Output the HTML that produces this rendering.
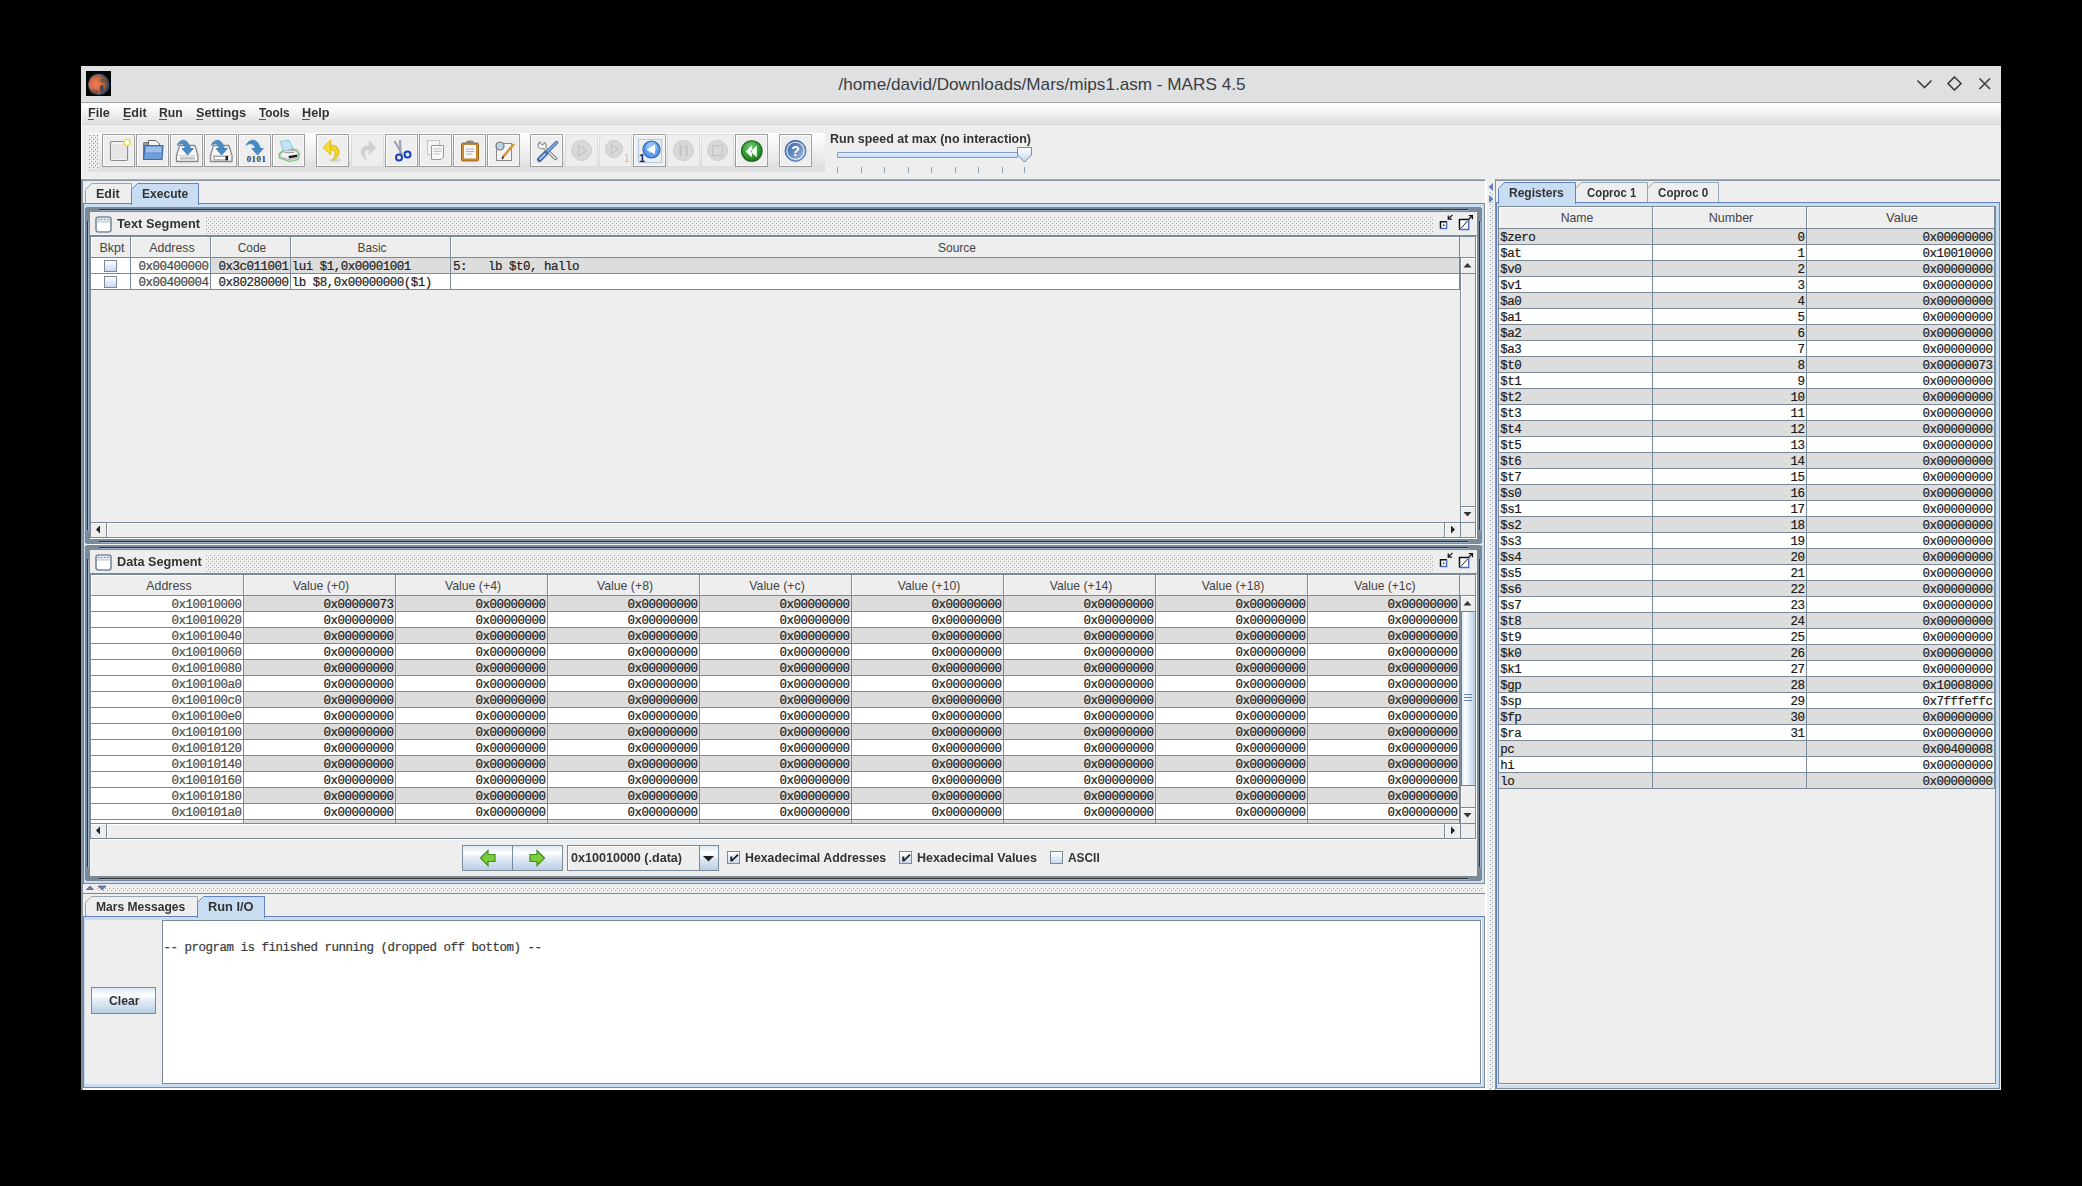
<!DOCTYPE html><html><head><meta charset="utf-8"><style>html,body{margin:0;padding:0;}body{width:2082px;height:1186px;background:#000;position:relative;overflow:hidden;}body>div,body>svg{position:absolute;}.t{white-space:pre;}</style></head><body><div style="left:81px;top:66px;width:1920px;height:1024px;background:#eeeeee;"></div>
<div style="left:81px;top:66px;width:1920px;height:36px;background:#dfe0e2;"></div>
<div style="left:81px;top:102px;width:1920px;height:1px;background:#a4a6a8;"></div>
<svg style="left:86px;top:71px;" width="25" height="25" viewBox="0 0 25 25"><defs><radialGradient id="mg" cx="0.38" cy="0.5" r="0.62"><stop offset="0" stop-color="#f07a4c"/><stop offset="0.45" stop-color="#d86c45"/><stop offset="0.78" stop-color="#8c5a42"/><stop offset="1" stop-color="#23384c"/></radialGradient><filter id="mb" x="-20%" y="-20%" width="140%" height="140%"><feGaussianBlur stdDeviation="0.7"/></filter></defs><rect width="25" height="25" fill="#050506"/><g filter="url(#mb)"><circle cx="12.8" cy="13.4" r="10.6" fill="#2f5a80"/><circle cx="12.5" cy="13.2" r="10" fill="url(#mg)"/><ellipse cx="17.5" cy="9.5" rx="3.5" ry="2.2" fill="#6a5040" opacity=".8"/><ellipse cx="15.8" cy="17.8" rx="1.8" ry="4" fill="#3a4654" opacity=".9"/><ellipse cx="8.5" cy="20.5" rx="4" ry="2" fill="#6a4a3a" opacity=".6"/></g></svg>
<div class="t" style="left:1041.5px;top:75.91px;font:normal 17px 'Liberation Sans', sans-serif;line-height:17px;color:#3a3d41;transform:translateX(-50%) scaleX(1.0088);transform-origin:center;">/home/david/Downloads/Mars/mips1.asm - MARS 4.5</div>
<svg style="left:1910px;top:70px;" width="90" height="26" viewBox="0 0 90 26"><g stroke="#3c3f43" stroke-width="1.6" fill="none"><path d="M7.5 10.5 L14.5 17.5 L21.5 10.5"/><path d="M44.5 7 L51 13.5 L44.5 20 L38 13.5 Z"/><path d="M69.5 8.5 L80 19 M80 8.5 L69.5 19"/></g></svg>
<div style="left:81px;top:103px;width:1920px;height:21px;background:linear-gradient(#ffffff 0%, #f4f4f4 40%, #dddddd 100%);"></div>
<div style="left:81px;top:123px;width:1920px;height:1px;background:#e2e2e2;"></div>
<div style="left:81px;top:124px;width:1920px;height:1px;background:#d6d6d6;"></div>
<div class="t" style="left:87.5px;top:106.92px;font:bold 12.5px 'Liberation Sans', sans-serif;line-height:12.5px;color:#333;transform:scaleX(1.0117);transform-origin:left;">File</div>
<div style="left:87.5px;top:118.5px;width:6.5px;height:1px;background:#555;"></div>
<div class="t" style="left:122.5px;top:106.92px;font:bold 12.5px 'Liberation Sans', sans-serif;line-height:12.5px;color:#333;transform:scaleX(1.0038);transform-origin:left;">Edit</div>
<div style="left:122.5px;top:118.5px;width:7px;height:1px;background:#555;"></div>
<div class="t" style="left:159.3px;top:106.92px;font:bold 12.5px 'Liberation Sans', sans-serif;line-height:12.5px;color:#333;transform:scaleX(0.9748);transform-origin:left;">Run</div>
<div style="left:159.3px;top:118.5px;width:7.5px;height:1px;background:#555;"></div>
<div class="t" style="left:196px;top:106.92px;font:bold 12.5px 'Liberation Sans', sans-serif;line-height:12.5px;color:#333;transform:scaleX(1.0139);transform-origin:left;">Settings</div>
<div style="left:196px;top:118.5px;width:7px;height:1px;background:#555;"></div>
<div class="t" style="left:259.2px;top:106.92px;font:bold 12.5px 'Liberation Sans', sans-serif;line-height:12.5px;color:#333;transform:scaleX(0.9443);transform-origin:left;">Tools</div>
<div style="left:259.2px;top:118.5px;width:7px;height:1px;background:#555;"></div>
<div class="t" style="left:302.3px;top:106.92px;font:bold 12.5px 'Liberation Sans', sans-serif;line-height:12.5px;color:#333;transform:scaleX(1.0150);transform-origin:left;">Help</div>
<div style="left:302.3px;top:118.5px;width:8px;height:1px;background:#555;"></div>
<div style="left:88px;top:133px;width:737px;height:37px;background:linear-gradient(#ffffff 0%, #f4f4f4 35%, #e9e9e9 70%, #dcdcdc 100%);"></div>
<div style="left:88px;top:170px;width:737px;height:2px;background:#e2e2e2;"></div>
<svg style="left:88px;top:134px" width="11" height="35"><defs><pattern id="bmp" width="4" height="4" patternUnits="userSpaceOnUse"><rect x="0" y="0" width="1" height="1" fill="#fff"/><rect x="1" y="1" width="1" height="1" fill="#8494a8"/><rect x="2" y="2" width="1" height="1" fill="#fff"/><rect x="3" y="3" width="1" height="1" fill="#8494a8"/></pattern></defs><rect width="11" height="35" fill="#e6e9ec"/><rect width="11" height="35" fill="url(#bmp)"/></svg>
<div style="left:102px;top:134px;width:33px;height:33px;box-sizing:border-box;border:1px solid #9d9d9d;box-shadow:inset 1px 1px 0 #ffffff, inset -1px -1px 0 #f8f8f8;background:#eeeeee;"></div>
<div style="left:136px;top:134px;width:33px;height:33px;box-sizing:border-box;border:1px solid #9d9d9d;box-shadow:inset 1px 1px 0 #ffffff, inset -1px -1px 0 #f8f8f8;background:#eeeeee;"></div>
<div style="left:170px;top:134px;width:33px;height:33px;box-sizing:border-box;border:1px solid #9d9d9d;box-shadow:inset 1px 1px 0 #ffffff, inset -1px -1px 0 #f8f8f8;background:#eeeeee;"></div>
<div style="left:204px;top:134px;width:33px;height:33px;box-sizing:border-box;border:1px solid #9d9d9d;box-shadow:inset 1px 1px 0 #ffffff, inset -1px -1px 0 #f8f8f8;background:#eeeeee;"></div>
<div style="left:238px;top:134px;width:33px;height:33px;box-sizing:border-box;border:1px solid #9d9d9d;box-shadow:inset 1px 1px 0 #ffffff, inset -1px -1px 0 #f8f8f8;background:#eeeeee;"></div>
<div style="left:272px;top:134px;width:33px;height:33px;box-sizing:border-box;border:1px solid #9d9d9d;box-shadow:inset 1px 1px 0 #ffffff, inset -1px -1px 0 #f8f8f8;background:#eeeeee;"></div>
<div style="left:316px;top:134px;width:33px;height:33px;box-sizing:border-box;border:1px solid #9d9d9d;box-shadow:inset 1px 1px 0 #ffffff, inset -1px -1px 0 #f8f8f8;background:#eeeeee;"></div>
<div style="left:351px;top:134px;width:33px;height:33px;box-sizing:border-box;border:1px solid #dcdcdc;background:#eeeeee;"></div>
<div style="left:385px;top:134px;width:33px;height:33px;box-sizing:border-box;border:1px solid #9d9d9d;box-shadow:inset 1px 1px 0 #ffffff, inset -1px -1px 0 #f8f8f8;background:#eeeeee;"></div>
<div style="left:419px;top:134px;width:33px;height:33px;box-sizing:border-box;border:1px solid #9d9d9d;box-shadow:inset 1px 1px 0 #ffffff, inset -1px -1px 0 #f8f8f8;background:#eeeeee;"></div>
<div style="left:453px;top:134px;width:33px;height:33px;box-sizing:border-box;border:1px solid #9d9d9d;box-shadow:inset 1px 1px 0 #ffffff, inset -1px -1px 0 #f8f8f8;background:#eeeeee;"></div>
<div style="left:487px;top:134px;width:33px;height:33px;box-sizing:border-box;border:1px solid #9d9d9d;box-shadow:inset 1px 1px 0 #ffffff, inset -1px -1px 0 #f8f8f8;background:#eeeeee;"></div>
<div style="left:530px;top:134px;width:33px;height:33px;box-sizing:border-box;border:1px solid #9d9d9d;box-shadow:inset 1px 1px 0 #ffffff, inset -1px -1px 0 #f8f8f8;background:#eeeeee;"></div>
<div style="left:565px;top:134px;width:33px;height:33px;box-sizing:border-box;border:1px solid #dcdcdc;background:#eeeeee;"></div>
<div style="left:599px;top:134px;width:33px;height:33px;box-sizing:border-box;border:1px solid #dcdcdc;background:#eeeeee;"></div>
<div style="left:633px;top:134px;width:33px;height:33px;box-sizing:border-box;border:1px solid #9d9d9d;box-shadow:inset 1px 1px 0 #ffffff, inset -1px -1px 0 #f8f8f8;background:#eeeeee;"></div>
<div style="left:638px;top:139px;width:24px;height:24px;box-sizing:border-box;border:1px solid #b3c9e0;"></div>
<div style="left:667px;top:134px;width:33px;height:33px;box-sizing:border-box;border:1px solid #dcdcdc;background:#eeeeee;"></div>
<div style="left:701px;top:134px;width:33px;height:33px;box-sizing:border-box;border:1px solid #dcdcdc;background:#eeeeee;"></div>
<div style="left:735px;top:134px;width:33px;height:33px;box-sizing:border-box;border:1px solid #9d9d9d;box-shadow:inset 1px 1px 0 #ffffff, inset -1px -1px 0 #f8f8f8;background:#eeeeee;"></div>
<div style="left:779px;top:134px;width:33px;height:33px;box-sizing:border-box;border:1px solid #9d9d9d;box-shadow:inset 1px 1px 0 #ffffff, inset -1px -1px 0 #f8f8f8;background:#eeeeee;"></div>
<svg style="left:102px;top:134px;" width="33" height="33" viewBox="0 0 33 33"><rect x="8.5" y="7.5" width="17" height="19" rx="1.5" fill="#f4f4f4" stroke="#8c8c8c" stroke-width="1.2"/><rect x="10" y="10" width="14" height="15" fill="#e6e6e6"/><circle cx="25" cy="8.5" r="3" fill="#ffffff" stroke="#eedd55" stroke-width="1.6"/></svg>
<svg style="left:136px;top:134px;" width="33" height="33" viewBox="0 0 33 33"><rect x="7.5" y="8.5" width="9" height="17" rx="1" fill="#999" stroke="#777" stroke-width="1"/><path d="M12.5 6.5 H20 L23.5 10 V17 H12.5 Z" fill="#f6f6f6" stroke="#666" stroke-width="1"/><path d="M9 11.5 H27 L26 25.5 H7.5 Z" fill="#6f9fd6" stroke="#3d6aab" stroke-width="1.2"/><rect x="10" y="13" width="15" height="5" fill="#9cc0e8"/></svg>
<svg style="left:170px;top:134px;" width="33" height="33" viewBox="0 0 33 33"><path d="M6.5 27.5 V21.5 L9.5 11.5 H25 L28 21.5 V27.5 Z" fill="#f7f7f7" stroke="#8a8a8a" stroke-width="1.3" stroke-linejoin="round"/><path d="M7 21.5 H27.5" stroke="#d6d6d6" stroke-width="1"/><rect x="10" y="22.8" width="15" height="2.8" fill="#c4c4c4"/><path d="M7.2 11.5 C9 5, 18 3, 20.3 14.5 L15.2 14.5 C14.5 10, 11 8, 7.2 11.5 Z" fill="#4a8cc6" stroke="#3a78b2" stroke-width=".6"/><path d="M12 14.5 H23.5 L17.6 21 Z" fill="#4a8cc6" stroke="#3a78b2" stroke-width=".8" stroke-linejoin="round"/></svg>
<svg style="left:204px;top:134px;" width="33" height="33" viewBox="0 0 33 33"><path d="M6.5 27.5 V21.5 L9.5 11.5 H25 L28 21.5 V27.5 Z" fill="#f7f7f7" stroke="#8a8a8a" stroke-width="1.3" stroke-linejoin="round"/><path d="M7 21.5 H27.5" stroke="#d6d6d6" stroke-width="1"/><rect x="10" y="22.3" width="13.5" height="3.6" fill="#ffffff" stroke="#8a8a8a" stroke-width=".9"/><rect x="21.5" y="22" width="2.6" height="4.2" fill="#222"/><path d="M7.2 11.5 C9 5, 18 3, 20.3 14.5 L15.2 14.5 C14.5 10, 11 8, 7.2 11.5 Z" fill="#4a8cc6" stroke="#3a78b2" stroke-width=".6"/><path d="M12 14.5 H23.5 L17.6 21 Z" fill="#4a8cc6" stroke="#3a78b2" stroke-width=".8" stroke-linejoin="round"/></svg>
<svg style="left:238px;top:134px;" width="33" height="33" viewBox="0 0 33 33"><path d="M8.2 11.5 C10 5, 20 3, 22.3 14.5 L17.2 14.5 C16.5 10, 12 8, 8.2 11.5 Z" fill="#4a8cc6" stroke="#3a78b2" stroke-width=".6"/><path d="M13.8 14.5 H25.3 L19.5 21 Z" fill="#4a8cc6" stroke="#3a78b2" stroke-width=".8" stroke-linejoin="round"/><text x="18.5" y="28.3" font-family="'Liberation Serif', serif" font-size="9" font-weight="bold" text-anchor="middle" fill="#3a3a3a" letter-spacing=".4">0101</text></svg>
<svg style="left:272px;top:134px;" width="33" height="33" viewBox="0 0 33 33"><path d="M7 20 L12 15.5 H24.5 L27.5 20 L26 25.5 L18 27.5 L7.5 24 Z" fill="none" stroke="#6cc06c" stroke-width="1.1"/><path d="M8.3 7.4 L17 6.4 L21 14.5 L11.7 17.5 Z" fill="#c4e2f8" stroke="#7cc8c8" stroke-width=".9"/><path d="M8 20.5 L12.5 16.8 H23.5 L26.5 20 L25.5 24 L17.5 25.8 L8.5 23 Z" fill="#f2f2f2" stroke="#a8a8a8" stroke-width=".9"/><path d="M16.5 22 L25.5 20.5 L25 23 L17 24.5 Z" fill="#1a1a1a"/><path d="M12.5 18.5 H22" stroke="#888" stroke-width=".8"/></svg>
<svg style="left:316px;top:134px;" width="33" height="33" viewBox="0 0 33 33"><ellipse cx="19" cy="26" rx="6" ry="2" fill="#bbb" opacity=".45"/><path d="M14.5 11 Q23.5 11 23 19 Q22.5 24 16.5 26.5 Q19.5 22 19 18.5 Q18.5 15.5 14.5 16 Z" fill="#f0d428" stroke="#d2ac10" stroke-width=".7"/><path d="M7 13.5 L14.8 6 V21 Z" fill="#f3da30" stroke="#d2ac10" stroke-width=".7" stroke-linejoin="round"/></svg>
<svg style="left:351px;top:134px;" width="33" height="33" viewBox="0 0 33 33"><path d="M18.5 11 Q9.5 11 10 19 Q10.5 24 16.5 26.5 Q13.5 22 14 18.5 Q14.5 15.5 18.5 16 Z" fill="#d0d0d0"/><path d="M25.5 13.5 L17.8 6 V21 Z" fill="#d0d0d0"/></svg>
<svg style="left:385px;top:134px;" width="33" height="33" viewBox="0 0 33 33"><path d="M9.5 7 L17 20 M15 6 L15.5 20" stroke="#9aa0b8" stroke-width="2.2" fill="none"/><circle cx="14" cy="23.5" r="3" fill="none" stroke="#1a3fb8" stroke-width="2"/><circle cx="22.5" cy="20.5" r="3" fill="none" stroke="#1a3fb8" stroke-width="2"/></svg>
<svg style="left:419px;top:134px;" width="33" height="33" viewBox="0 0 33 33"><rect x="8.5" y="6.5" width="12" height="14" fill="#f4f4f4" stroke="#c4c4c4"/><path d="M12.5 11.5 H24.5 V23 L22 25.5 H12.5 Z" fill="#f8f8f8" stroke="#999" stroke-width="1"/><path d="M14.5 15 H22.5 M14.5 17.5 H22.5 M14.5 20 H21" stroke="#bbb" stroke-width=".9"/></svg>
<svg style="left:453px;top:134px;" width="33" height="33" viewBox="0 0 33 33"><rect x="8.5" y="9" width="17" height="18" rx="1.5" fill="#c88a2e" stroke="#9a6a20" stroke-width="1"/><rect x="11" y="11" width="12" height="13.5" fill="#f6f6f6"/><rect x="13" y="6.5" width="8" height="4" rx="2" fill="#888"/><path d="M13 15 H21 M13 17.5 H21 M13 20 H19" stroke="#aaa" stroke-width=".9"/></svg>
<svg style="left:487px;top:134px;" width="33" height="33" viewBox="0 0 33 33"><rect x="9.5" y="9.5" width="15" height="17" fill="#f4f4f4" stroke="#888" stroke-width="1"/><circle cx="13" cy="12" r="4" fill="#b8d0ea" stroke="#777" stroke-width="1.2"/><path d="M27 10 L16 23" stroke="#d09838" stroke-width="2.6"/><path d="M16.5 22.5 L15 25" stroke="#333" stroke-width="1.5"/></svg>
<svg style="left:530px;top:134px;" width="33" height="33" viewBox="0 0 33 33"><path d="M10 8 Q7 10 8.5 13 Q10.5 15.5 13.5 14.5 L24 25 Q26 26.5 27 24.5 L16 13.8 Q17 10.5 14.5 8.5 L12.8 10.8 L11 10.2 L10.5 8.3 Z" fill="#f4f4f4" stroke="#8c8c8c" stroke-width="1.1" stroke-linejoin="round"/><path d="M26.5 8.5 L17 18" stroke="#3d6aab" stroke-width="3.4" stroke-linecap="round"/><path d="M26.5 8.5 L17 18" stroke="#8db4e2" stroke-width="1.4" stroke-linecap="round"/><path d="M15.5 19.5 L9.5 25.5" stroke="#3d6aab" stroke-width="5.2" stroke-linecap="round"/><path d="M15 20 L10 25" stroke="#a9c6ea" stroke-width="1.8" stroke-linecap="round"/></svg>
<svg style="left:565px;top:134px;" width="33" height="33" viewBox="0 0 33 33"><circle cx="16.5" cy="16.5" r="10" fill="#d8d8d8" stroke="#cccccc" stroke-width="1"/><path d="M13.5 11 L22 16.5 L13.5 22 Z" fill="none" stroke="#c4c4c4" stroke-width="1.2"/></svg>
<svg style="left:599px;top:134px;" width="33" height="33" viewBox="0 0 33 33"><circle cx="15" cy="15" r="8.5" fill="#d8d8d8" stroke="#cccccc" stroke-width="1"/><path d="M12.5 10.5 L19.5 15 L12.5 19.5 Z" fill="none" stroke="#c4c4c4" stroke-width="1.2"/><text x="25" y="28" font-family="'Liberation Sans', sans-serif" font-size="10" fill="#c0c0c0">1</text></svg>
<svg style="left:633px;top:134px;" width="33" height="33" viewBox="0 0 33 33"><circle cx="18.5" cy="15.5" r="8.5" fill="#5a9be8" stroke="#2c67c0" stroke-width="1.2"/><circle cx="18.5" cy="13.5" r="5.5" fill="#a9d0f7" opacity=".7"/><path d="M22 10.5 L14 15.5 L22 20.5 Z" fill="#ffffff"/><text x="6" y="28" font-family="'Liberation Sans', sans-serif" font-size="11" font-weight="bold" fill="#1a2a50">1</text></svg>
<svg style="left:667px;top:134px;" width="33" height="33" viewBox="0 0 33 33"><circle cx="16.5" cy="16.5" r="10" fill="#d8d8d8" stroke="#cccccc" stroke-width="1"/><path d="M13.5 11 V22 M19.5 11 V22" stroke="#c4c4c4" stroke-width="2.2"/></svg>
<svg style="left:701px;top:134px;" width="33" height="33" viewBox="0 0 33 33"><circle cx="16.5" cy="16.5" r="10" fill="#d8d8d8" stroke="#cccccc" stroke-width="1"/><rect x="11.5" y="11.5" width="10" height="10" fill="none" stroke="#c4c4c4" stroke-width="1.2"/></svg>
<svg style="left:735px;top:134px;" width="33" height="33" viewBox="0 0 33 33"><defs><radialGradient id="rg" cx="0.45" cy="0.35" r="0.7"><stop offset="0" stop-color="#7fd07f"/><stop offset="0.6" stop-color="#2f9a2f"/><stop offset="1" stop-color="#1a641a"/></radialGradient></defs><circle cx="16.8" cy="17" r="10.3" fill="url(#rg)" stroke="#1f5f1f" stroke-width="1.1"/><path d="M10.6 17.5 L16.8 11.6 V23.2 Z" fill="#ffffff"/><path d="M15.6 17.5 L21.8 11.6 V23.2 Z" fill="#f0fff0"/><path d="M15.6 17.5 L16.8 16.3 V18.7 Z" fill="#3a9a3a"/></svg>
<svg style="left:779px;top:134px;" width="33" height="33" viewBox="0 0 33 33"><defs><linearGradient id="hg" x1="0" y1="0" x2="1" y2="1"><stop offset="0" stop-color="#2a5597"/><stop offset="1" stop-color="#a8c6e6"/></linearGradient></defs><circle cx="16.5" cy="16.8" r="10.5" fill="url(#hg)" stroke="#4a72b0" stroke-width="1"/><circle cx="16.5" cy="16.8" r="8.6" fill="none" stroke="#e8f0fa" stroke-width="1.1"/><text x="16.5" y="22" font-family="'Liberation Sans', sans-serif" font-size="14" font-weight="bold" text-anchor="middle" fill="#ffffff">?</text></svg>
<div class="t" style="left:830px;top:132.82px;font:bold 12.5px 'Liberation Sans', sans-serif;line-height:12.5px;color:#333;transform:scaleX(0.9979);transform-origin:left;">Run speed at max (no interaction)</div>
<div style="left:837px;top:152px;width:181px;height:6px;box-sizing:border-box;border:1px solid #7b9ad0;border-radius:1px;background:linear-gradient(#e8f1fb,#c6daf0);"></div>
<svg style="left:1016px;top:146px;" width="18" height="18" viewBox="0 0 18 18"><path d="M1.5 1.5 H15.5 V9 L8.5 16 L1.5 9 Z" fill="url(#thg)" stroke="#7a8a99" stroke-width="1"/><defs><linearGradient id="thg" x1="0" y1="0" x2="0" y2="1"><stop offset="0" stop-color="#ffffff"/><stop offset="1" stop-color="#c0d4ea"/></linearGradient></defs></svg>
<div style="left:837px;top:167px;width:1px;height:6px;background:#8aa4c4;"></div>
<div style="left:861px;top:167px;width:1px;height:6px;background:#8aa4c4;"></div>
<div style="left:884px;top:167px;width:1px;height:6px;background:#8aa4c4;"></div>
<div style="left:908px;top:167px;width:1px;height:6px;background:#8aa4c4;"></div>
<div style="left:931px;top:167px;width:1px;height:6px;background:#8aa4c4;"></div>
<div style="left:955px;top:167px;width:1px;height:6px;background:#8aa4c4;"></div>
<div style="left:978px;top:167px;width:1px;height:6px;background:#8aa4c4;"></div>
<div style="left:1002px;top:167px;width:1px;height:6px;background:#8aa4c4;"></div>
<div style="left:1024px;top:167px;width:1px;height:6px;background:#8aa4c4;"></div>
<div style="left:81px;top:179px;width:1406px;height:1px;background:#a3b0bc;"></div>
<div style="left:81px;top:180px;width:1406px;height:1px;background:#8596a6;"></div>
<div style="left:81px;top:179px;width:2px;height:911px;background:#8393a2;"></div>
<div style="left:81px;top:103px;width:1px;height:76px;background:#fafafa;"></div>
<div style="left:83px;top:181px;width:1402px;height:22px;background:#eeeeee;"></div>
<svg style="left:85px;top:183px;" width="47" height="21" viewBox="0 0 47 21"><path d="M0.5 21 V6.5 L6.5 0.5 H46.5 V21" fill="#eeeeee" stroke="#96a5b4" stroke-width="1"/></svg>
<div class="t" style="left:95.7px;top:187.82px;font:bold 12.5px 'Liberation Sans', sans-serif;line-height:12.5px;color:#333;transform:scaleX(0.9996);transform-origin:left;">Edit</div>
<div style="left:83px;top:203px;width:1402px;height:1px;background:#6382bf;"></div>
<div style="left:83px;top:203px;width:1px;height:681px;background:#6382bf;"></div>
<div style="left:84px;top:204px;width:1400px;height:3px;background:#c8ddf2;"></div>
<div style="left:84px;top:204px;width:1px;height:679px;background:#c8ddf2;"></div>
<div style="left:1482px;top:204px;width:2px;height:679px;background:#c8ddf2;"></div>
<div style="left:84px;top:881px;width:1400px;height:2px;background:#c8ddf2;"></div>
<div style="left:1484px;top:203px;width:1px;height:681px;background:#7a8a99;"></div>
<div style="left:83px;top:883px;width:1402px;height:1px;background:#7a8a99;"></div>
<svg style="left:131px;top:183px;" width="68" height="22" viewBox="0 0 68 22"><path d="M0.5 22 V6.5 L6.5 0.5 H67.5 V22" fill="#c8ddf2" stroke="#6382bf" stroke-width="1"/></svg>
<div class="t" style="left:141.7px;top:187.82px;font:bold 12.5px 'Liberation Sans', sans-serif;line-height:12.5px;color:#333;transform:scaleX(0.9655);transform-origin:left;">Execute</div>
<div style="left:132px;top:203px;width:66px;height:1px;background:#c8ddf2;"></div>
<div style="left:85px;top:544px;width:1397px;height:1px;background:#f4f4f4;"></div>
<div style="left:86px;top:207px;width:1395px;height:337px;background:#7a8a99;"></div>
<div style="left:85px;top:208px;width:1397px;height:335px;background:#7a8a99;"></div>
<div style="left:90px;top:212px;width:1387px;height:327px;background:#eeeeee;"></div>
<div style="left:100px;top:210px;width:1369px;height:1px;background:#9fb1c3;"></div>
<div style="left:88px;top:222px;width:1px;height:309px;background:#9fb1c3;"></div>
<div style="left:1480px;top:222px;width:1px;height:309px;background:#9fb1c3;"></div>
<div style="left:100px;top:542px;width:1369px;height:1px;background:#9fb1c3;"></div>
<div style="left:99px;top:209px;width:1369px;height:1px;background:#333333;"></div>
<div style="left:87px;top:221px;width:1px;height:309px;background:#333333;"></div>
<div style="left:1479px;top:221px;width:1px;height:309px;background:#333333;"></div>
<div style="left:99px;top:541px;width:1369px;height:1px;background:#333333;"></div>
<div style="left:90px;top:235px;width:1387px;height:1px;background:#7a8a99;"></div>
<svg style="left:95px;top:216px;" width="17" height="17" viewBox="0 0 17 17"><rect x="1" y="1" width="15" height="15" rx="2.5" fill="#ffffff" stroke="#7a8a99" stroke-width="1.6"/><rect x="2" y="2" width="13" height="3.5" fill="#dfe7f3"/><path d="M3 3.5 H14" stroke="#6b8fd6" stroke-width="1" stroke-dasharray="1.5 1.5"/><rect x="2" y="5.5" width="13" height="1" fill="#b9c3cc"/></svg>
<div class="t" style="left:117.0px;top:217.76px;font:bold 12.8px 'Liberation Sans', sans-serif;line-height:12.8px;color:#333;transform:scaleX(1.0004);transform-origin:left;">Text Segment</div>
<svg style="left:205px;top:216px" width="1228" height="18"><defs><pattern id="bts" width="4" height="4" patternUnits="userSpaceOnUse"><rect x="0" y="0" width="1" height="1" fill="#ffffff"/><rect x="2" y="2" width="1" height="1" fill="#ffffff"/><rect x="1" y="1" width="1" height="1" fill="#96a3b0"/><rect x="3" y="3" width="1" height="1" fill="#96a3b0"/></pattern></defs><rect width="1228" height="18" fill="url(#bts)"/></svg>
<svg style="left:1435px;top:213px;" width="42" height="18" viewBox="0 0 42 18"><rect x="6" y="9" width="5" height="6" fill="#fff"/><path d="M5.5 15.8 V8.7 H12" stroke="#111" stroke-width="1.5" fill="none"/><path d="M11.6 8.7 V15.6 H5.5" stroke="#4a6fc0" stroke-width="1.5" fill="none"/><rect x="8" y="11.5" width="1.5" height="1.5" fill="#333"/><path d="M17.5 1.8 L13.8 5.5" stroke="#111" stroke-width="1.1" fill="none"/><path d="M13.3 2.6 V6.2 H16.9" stroke="#111" stroke-width="1.3" fill="none"/><rect x="25" y="7" width="8" height="9" fill="#fff"/><path d="M24.5 16.8 V6.6 H34" stroke="#111" stroke-width="1.5" fill="none"/><path d="M33.7 6.6 V16.6 H24.5" stroke="#4a6fc0" stroke-width="1.5" fill="none"/><path d="M25.8 15.5 L32.5 8" stroke="#222" stroke-width="1"/><path d="M33.5 6.5 L37 3" stroke="#111" stroke-width="1.1" fill="none"/><path d="M33.8 2.6 H37.4 V6.2" stroke="#111" stroke-width="1.3" fill="none"/></svg>
<div style="left:90px;top:236px;width:1386px;height:1px;background:#7a8a99;"></div>
<div style="left:90px;top:236px;width:1px;height:302px;background:#7a8a99;"></div>
<div style="left:1475px;top:236px;width:1px;height:302px;background:#7a8a99;"></div>
<div style="left:90px;top:537px;width:1386px;height:1px;background:#7a8a99;"></div>
<div style="left:1476px;top:237px;width:1px;height:302px;background:#ffffff;"></div>
<div style="left:91px;top:538px;width:1386px;height:1px;background:#ffffff;"></div>
<div style="left:91px;top:237px;width:1369px;height:284px;background:#eeeeee;"></div>
<div style="left:91px;top:237px;width:40px;height:21px;background:#eeeeee;"></div>
<div style="left:91px;top:237px;width:39px;height:1px;background:#ffffff;"></div>
<div style="left:91px;top:237px;width:1px;height:20px;background:#ffffff;"></div>
<div style="left:130px;top:237px;width:1px;height:21px;background:#7a8a99;"></div>
<div style="left:91px;top:257px;width:40px;height:1px;background:#7a8a99;"></div>
<div class="t" style="left:112.0px;top:241.37px;font:normal 13.5px 'Liberation Sans', sans-serif;line-height:13.5px;color:#444444;transform:translateX(-50%) scaleX(0.9254);transform-origin:center;">Bkpt</div>
<div style="left:131px;top:237px;width:80px;height:21px;background:#eeeeee;"></div>
<div style="left:131px;top:237px;width:79px;height:1px;background:#ffffff;"></div>
<div style="left:131px;top:237px;width:1px;height:20px;background:#ffffff;"></div>
<div style="left:210px;top:237px;width:1px;height:21px;background:#7a8a99;"></div>
<div style="left:131px;top:257px;width:80px;height:1px;background:#7a8a99;"></div>
<div class="t" style="left:172.0px;top:241.37px;font:normal 13.5px 'Liberation Sans', sans-serif;line-height:13.5px;color:#444444;transform:translateX(-50%) scaleX(0.9186);transform-origin:center;">Address</div>
<div style="left:211px;top:237px;width:80px;height:21px;background:#eeeeee;"></div>
<div style="left:211px;top:237px;width:79px;height:1px;background:#ffffff;"></div>
<div style="left:211px;top:237px;width:1px;height:20px;background:#ffffff;"></div>
<div style="left:290px;top:237px;width:1px;height:21px;background:#7a8a99;"></div>
<div style="left:211px;top:257px;width:80px;height:1px;background:#7a8a99;"></div>
<div class="t" style="left:252.0px;top:241.37px;font:normal 13.5px 'Liberation Sans', sans-serif;line-height:13.5px;color:#444444;transform:translateX(-50%) scaleX(0.8829);transform-origin:center;">Code</div>
<div style="left:291px;top:237px;width:160px;height:21px;background:#eeeeee;"></div>
<div style="left:291px;top:237px;width:159px;height:1px;background:#ffffff;"></div>
<div style="left:291px;top:237px;width:1px;height:20px;background:#ffffff;"></div>
<div style="left:450px;top:237px;width:1px;height:21px;background:#7a8a99;"></div>
<div style="left:291px;top:257px;width:160px;height:1px;background:#7a8a99;"></div>
<div class="t" style="left:372.0px;top:241.37px;font:normal 13.5px 'Liberation Sans', sans-serif;line-height:13.5px;color:#444444;transform:translateX(-50%) scaleX(0.8784);transform-origin:center;">Basic</div>
<div style="left:451px;top:237px;width:1009px;height:21px;background:#eeeeee;"></div>
<div style="left:451px;top:237px;width:1008px;height:1px;background:#ffffff;"></div>
<div style="left:451px;top:237px;width:1px;height:20px;background:#ffffff;"></div>
<div style="left:1459px;top:237px;width:1px;height:21px;background:#7a8a99;"></div>
<div style="left:451px;top:257px;width:1009px;height:1px;background:#7a8a99;"></div>
<div class="t" style="left:956.5px;top:241.37px;font:normal 13.5px 'Liberation Sans', sans-serif;line-height:13.5px;color:#444444;transform:translateX(-50%) scaleX(0.8906);transform-origin:center;">Source</div>
<div style="left:1460px;top:237px;width:15px;height:21px;background:#eeeeee;"></div>
<div style="left:1460px;top:257px;width:15px;height:1px;background:#7a8a99;"></div>
<div style="left:91px;top:258px;width:40px;height:15px;background:#ffffff;"></div>
<div style="left:130px;top:258px;width:1px;height:16px;background:#7a8a99;"></div>
<div style="left:131px;top:258px;width:80px;height:15px;background:#ffffff;"></div>
<div style="left:210px;top:258px;width:1px;height:16px;background:#7a8a99;"></div>
<div style="left:211px;top:258px;width:80px;height:15px;background:#dddddd;"></div>
<div style="left:290px;top:258px;width:1px;height:16px;background:#7a8a99;"></div>
<div style="left:291px;top:258px;width:160px;height:15px;background:#dddddd;"></div>
<div style="left:450px;top:258px;width:1px;height:16px;background:#7a8a99;"></div>
<div style="left:451px;top:258px;width:1009px;height:15px;background:#dddddd;"></div>
<div style="left:1459px;top:258px;width:1px;height:16px;background:#7a8a99;"></div>
<div style="left:91px;top:273px;width:1369px;height:1px;background:#7a8a99;"></div>
<div style="left:104px;top:260px;width:13px;height:12px;box-sizing:border-box;border:1px solid #7a8a99;background:linear-gradient(#ffffff,#c8daef);"></div>
<div class="t" style="right:1873.5px;top:260.92px;font:normal 12.5px 'Liberation Mono', monospace;line-height:12.5px;color:#444;letter-spacing:-0.5px;-webkit-text-stroke:0.2px #444;">0x00400000</div>
<div class="t" style="right:1793.5px;top:260.92px;font:normal 12.5px 'Liberation Mono', monospace;line-height:12.5px;color:#222;letter-spacing:-0.5px;-webkit-text-stroke:0.2px #222;">0x3c011001</div>
<div class="t" style="left:291.8px;top:260.92px;font:normal 12.5px 'Liberation Mono', monospace;line-height:12.5px;color:#222;letter-spacing:-0.5px;-webkit-text-stroke:0.2px #222;">lui $1,0x00001001</div>
<div class="t" style="left:453px;top:260.92px;font:normal 12.5px 'Liberation Mono', monospace;line-height:12.5px;color:#222;letter-spacing:-0.5px;-webkit-text-stroke:0.2px #222;">5:   lb $t0, hallo</div>
<div style="left:91px;top:274px;width:40px;height:15px;background:#ffffff;"></div>
<div style="left:130px;top:274px;width:1px;height:16px;background:#7a8a99;"></div>
<div style="left:131px;top:274px;width:80px;height:15px;background:#ffffff;"></div>
<div style="left:210px;top:274px;width:1px;height:16px;background:#7a8a99;"></div>
<div style="left:211px;top:274px;width:80px;height:15px;background:#ffffff;"></div>
<div style="left:290px;top:274px;width:1px;height:16px;background:#7a8a99;"></div>
<div style="left:291px;top:274px;width:160px;height:15px;background:#ffffff;"></div>
<div style="left:450px;top:274px;width:1px;height:16px;background:#7a8a99;"></div>
<div style="left:451px;top:274px;width:1009px;height:15px;background:#ffffff;"></div>
<div style="left:1459px;top:274px;width:1px;height:16px;background:#7a8a99;"></div>
<div style="left:91px;top:289px;width:1369px;height:1px;background:#7a8a99;"></div>
<div style="left:104px;top:276px;width:13px;height:12px;box-sizing:border-box;border:1px solid #7a8a99;background:linear-gradient(#ffffff,#c8daef);"></div>
<div class="t" style="right:1873.5px;top:276.92px;font:normal 12.5px 'Liberation Mono', monospace;line-height:12.5px;color:#444;letter-spacing:-0.5px;-webkit-text-stroke:0.2px #444;">0x00400004</div>
<div class="t" style="right:1793.5px;top:276.92px;font:normal 12.5px 'Liberation Mono', monospace;line-height:12.5px;color:#222;letter-spacing:-0.5px;-webkit-text-stroke:0.2px #222;">0x80280000</div>
<div class="t" style="left:291.8px;top:276.92px;font:normal 12.5px 'Liberation Mono', monospace;line-height:12.5px;color:#222;letter-spacing:-0.5px;-webkit-text-stroke:0.2px #222;">lb $8,0x00000000($1)</div>
<div class="t" style="left:453px;top:276.92px;font:normal 12.5px 'Liberation Mono', monospace;line-height:12.5px;color:#222;letter-spacing:-0.5px;-webkit-text-stroke:0.2px #222;"></div>
<div style="left:1460px;top:258px;width:16px;height:264px;background:#eeeeee;"></div>
<div style="left:1460px;top:258px;width:1px;height:264px;background:#7a8a99;"></div>
<div style="left:1475px;top:258px;width:1px;height:264px;background:#7a8a99;"></div>
<div style="left:1461px;top:258px;width:1px;height:264px;background:#ffffff;"></div>
<div style="left:1461px;top:273px;width:14px;height:1px;background:#7a8a99;"></div>
<div style="left:1461px;top:258px;width:14px;height:1px;background:#ffffff;"></div>
<svg style="left:1463px;top:262px;" width="10" height="7" viewBox="0 0 10 7"><path d="M0.5 5.5 L4.5 1 L8.5 5.5 Z" fill="#333"/></svg>
<div style="left:1461px;top:506px;width:14px;height:1px;background:#7a8a99;"></div>
<div style="left:1461px;top:507px;width:14px;height:1px;background:#ffffff;"></div>
<svg style="left:1463px;top:511px;" width="10" height="7" viewBox="0 0 10 7"><path d="M0.5 1 L4.5 5.5 L8.5 1 Z" fill="#333"/></svg>
<div style="left:91px;top:522px;width:1369px;height:16px;background:#eeeeee;"></div>
<div style="left:91px;top:522px;width:1369px;height:1px;background:#7a8a99;"></div>
<div style="left:91px;top:537px;width:1369px;height:1px;background:#7a8a99;"></div>
<div style="left:91px;top:523px;width:1369px;height:1px;background:#ffffff;"></div>
<div style="left:106px;top:523px;width:1px;height:14px;background:#7a8a99;"></div>
<div style="left:107px;top:523px;width:1px;height:14px;background:#ffffff;"></div>
<svg style="left:95px;top:525.0px;" width="7" height="10" viewBox="0 0 7 10"><path d="M5 0.5 L1 4.5 L5 8.5 Z" fill="#222"/></svg>
<div style="left:1444px;top:523px;width:1px;height:14px;background:#7a8a99;"></div>
<div style="left:1445px;top:523px;width:1px;height:14px;background:#ffffff;"></div>
<svg style="left:1450px;top:524.5px;" width="7" height="10" viewBox="0 0 7 10"><path d="M1 0.5 L5 4.5 L1 8.5 Z" fill="#222"/></svg>
<div style="left:1460px;top:523px;width:15px;height:14px;background:#eeeeee;"></div>
<div style="left:1459px;top:522px;width:17px;height:1px;background:#7a8a99;"></div>
<div style="left:1460px;top:522px;width:1px;height:16px;background:#7a8a99;"></div>
<div style="left:86px;top:545px;width:1395px;height:336px;background:#7a8a99;"></div>
<div style="left:85px;top:546px;width:1397px;height:334px;background:#7a8a99;"></div>
<div style="left:90px;top:550px;width:1387px;height:326px;background:#eeeeee;"></div>
<div style="left:100px;top:548px;width:1369px;height:1px;background:#9fb1c3;"></div>
<div style="left:88px;top:560px;width:1px;height:308px;background:#9fb1c3;"></div>
<div style="left:1480px;top:560px;width:1px;height:308px;background:#9fb1c3;"></div>
<div style="left:100px;top:879px;width:1369px;height:1px;background:#9fb1c3;"></div>
<div style="left:99px;top:547px;width:1369px;height:1px;background:#333333;"></div>
<div style="left:87px;top:559px;width:1px;height:308px;background:#333333;"></div>
<div style="left:1479px;top:559px;width:1px;height:308px;background:#333333;"></div>
<div style="left:99px;top:878px;width:1369px;height:1px;background:#333333;"></div>
<div style="left:90px;top:573px;width:1387px;height:1px;background:#7a8a99;"></div>
<svg style="left:95px;top:554px;" width="17" height="17" viewBox="0 0 17 17"><rect x="1" y="1" width="15" height="15" rx="2.5" fill="#ffffff" stroke="#7a8a99" stroke-width="1.6"/><rect x="2" y="2" width="13" height="3.5" fill="#dfe7f3"/><path d="M3 3.5 H14" stroke="#6b8fd6" stroke-width="1" stroke-dasharray="1.5 1.5"/><rect x="2" y="5.5" width="13" height="1" fill="#b9c3cc"/></svg>
<div class="t" style="left:117.0px;top:555.76px;font:bold 12.8px 'Liberation Sans', sans-serif;line-height:12.8px;color:#333;transform:scaleX(0.9925);transform-origin:left;">Data Segment</div>
<svg style="left:205px;top:554px" width="1228" height="18"><defs><pattern id="bds" width="4" height="4" patternUnits="userSpaceOnUse"><rect x="0" y="0" width="1" height="1" fill="#ffffff"/><rect x="2" y="2" width="1" height="1" fill="#ffffff"/><rect x="1" y="1" width="1" height="1" fill="#96a3b0"/><rect x="3" y="3" width="1" height="1" fill="#96a3b0"/></pattern></defs><rect width="1228" height="18" fill="url(#bds)"/></svg>
<svg style="left:1435px;top:551px;" width="42" height="18" viewBox="0 0 42 18"><rect x="6" y="9" width="5" height="6" fill="#fff"/><path d="M5.5 15.8 V8.7 H12" stroke="#111" stroke-width="1.5" fill="none"/><path d="M11.6 8.7 V15.6 H5.5" stroke="#4a6fc0" stroke-width="1.5" fill="none"/><rect x="8" y="11.5" width="1.5" height="1.5" fill="#333"/><path d="M17.5 1.8 L13.8 5.5" stroke="#111" stroke-width="1.1" fill="none"/><path d="M13.3 2.6 V6.2 H16.9" stroke="#111" stroke-width="1.3" fill="none"/><rect x="25" y="7" width="8" height="9" fill="#fff"/><path d="M24.5 16.8 V6.6 H34" stroke="#111" stroke-width="1.5" fill="none"/><path d="M33.7 6.6 V16.6 H24.5" stroke="#4a6fc0" stroke-width="1.5" fill="none"/><path d="M25.8 15.5 L32.5 8" stroke="#222" stroke-width="1"/><path d="M33.5 6.5 L37 3" stroke="#111" stroke-width="1.1" fill="none"/><path d="M33.8 2.6 H37.4 V6.2" stroke="#111" stroke-width="1.3" fill="none"/></svg>
<div style="left:90px;top:574px;width:1386px;height:1px;background:#7a8a99;"></div>
<div style="left:90px;top:574px;width:1px;height:265px;background:#7a8a99;"></div>
<div style="left:1475px;top:574px;width:1px;height:265px;background:#7a8a99;"></div>
<div style="left:90px;top:838px;width:1386px;height:1px;background:#7a8a99;"></div>
<div style="left:1476px;top:575px;width:1px;height:265px;background:#ffffff;"></div>
<div style="left:91px;top:839px;width:1386px;height:1px;background:#ffffff;"></div>
<div style="left:91px;top:575px;width:1369px;height:247px;background:#ffffff;"></div>
<div style="left:91px;top:575px;width:153px;height:21px;background:#eeeeee;"></div>
<div style="left:91px;top:575px;width:152px;height:1px;background:#ffffff;"></div>
<div style="left:91px;top:575px;width:1px;height:20px;background:#ffffff;"></div>
<div style="left:243px;top:575px;width:1px;height:21px;background:#7a8a99;"></div>
<div style="left:91px;top:595px;width:153px;height:1px;background:#7a8a99;"></div>
<div class="t" style="left:168.5px;top:579.37px;font:normal 13.5px 'Liberation Sans', sans-serif;line-height:13.5px;color:#444444;transform:translateX(-50%) scaleX(0.9146);transform-origin:center;">Address</div>
<div style="left:244px;top:575px;width:152px;height:21px;background:#eeeeee;"></div>
<div style="left:244px;top:575px;width:151px;height:1px;background:#ffffff;"></div>
<div style="left:244px;top:575px;width:1px;height:20px;background:#ffffff;"></div>
<div style="left:395px;top:575px;width:1px;height:21px;background:#7a8a99;"></div>
<div style="left:244px;top:595px;width:152px;height:1px;background:#7a8a99;"></div>
<div class="t" style="left:321.0px;top:579.37px;font:normal 13.5px 'Liberation Sans', sans-serif;line-height:13.5px;color:#444444;transform:translateX(-50%) scaleX(0.9113);transform-origin:center;">Value (+0)</div>
<div style="left:396px;top:575px;width:152px;height:21px;background:#eeeeee;"></div>
<div style="left:396px;top:575px;width:151px;height:1px;background:#ffffff;"></div>
<div style="left:396px;top:575px;width:1px;height:20px;background:#ffffff;"></div>
<div style="left:547px;top:575px;width:1px;height:21px;background:#7a8a99;"></div>
<div style="left:396px;top:595px;width:152px;height:1px;background:#7a8a99;"></div>
<div class="t" style="left:473.0px;top:579.37px;font:normal 13.5px 'Liberation Sans', sans-serif;line-height:13.5px;color:#444444;transform:translateX(-50%) scaleX(0.9113);transform-origin:center;">Value (+4)</div>
<div style="left:548px;top:575px;width:152px;height:21px;background:#eeeeee;"></div>
<div style="left:548px;top:575px;width:151px;height:1px;background:#ffffff;"></div>
<div style="left:548px;top:575px;width:1px;height:20px;background:#ffffff;"></div>
<div style="left:699px;top:575px;width:1px;height:21px;background:#7a8a99;"></div>
<div style="left:548px;top:595px;width:152px;height:1px;background:#7a8a99;"></div>
<div class="t" style="left:625.0px;top:579.37px;font:normal 13.5px 'Liberation Sans', sans-serif;line-height:13.5px;color:#444444;transform:translateX(-50%) scaleX(0.9113);transform-origin:center;">Value (+8)</div>
<div style="left:700px;top:575px;width:152px;height:21px;background:#eeeeee;"></div>
<div style="left:700px;top:575px;width:151px;height:1px;background:#ffffff;"></div>
<div style="left:700px;top:575px;width:1px;height:20px;background:#ffffff;"></div>
<div style="left:851px;top:575px;width:1px;height:21px;background:#7a8a99;"></div>
<div style="left:700px;top:595px;width:152px;height:1px;background:#7a8a99;"></div>
<div class="t" style="left:777.0px;top:579.37px;font:normal 13.5px 'Liberation Sans', sans-serif;line-height:13.5px;color:#444444;transform:translateX(-50%) scaleX(0.9112);transform-origin:center;">Value (+c)</div>
<div style="left:852px;top:575px;width:152px;height:21px;background:#eeeeee;"></div>
<div style="left:852px;top:575px;width:151px;height:1px;background:#ffffff;"></div>
<div style="left:852px;top:575px;width:1px;height:20px;background:#ffffff;"></div>
<div style="left:1003px;top:575px;width:1px;height:21px;background:#7a8a99;"></div>
<div style="left:852px;top:595px;width:152px;height:1px;background:#7a8a99;"></div>
<div class="t" style="left:929.0px;top:579.37px;font:normal 13.5px 'Liberation Sans', sans-serif;line-height:13.5px;color:#444444;transform:translateX(-50%) scaleX(0.9050);transform-origin:center;">Value (+10)</div>
<div style="left:1004px;top:575px;width:152px;height:21px;background:#eeeeee;"></div>
<div style="left:1004px;top:575px;width:151px;height:1px;background:#ffffff;"></div>
<div style="left:1004px;top:575px;width:1px;height:20px;background:#ffffff;"></div>
<div style="left:1155px;top:575px;width:1px;height:21px;background:#7a8a99;"></div>
<div style="left:1004px;top:595px;width:152px;height:1px;background:#7a8a99;"></div>
<div class="t" style="left:1081.0px;top:579.37px;font:normal 13.5px 'Liberation Sans', sans-serif;line-height:13.5px;color:#444444;transform:translateX(-50%) scaleX(0.9050);transform-origin:center;">Value (+14)</div>
<div style="left:1156px;top:575px;width:152px;height:21px;background:#eeeeee;"></div>
<div style="left:1156px;top:575px;width:151px;height:1px;background:#ffffff;"></div>
<div style="left:1156px;top:575px;width:1px;height:20px;background:#ffffff;"></div>
<div style="left:1307px;top:575px;width:1px;height:21px;background:#7a8a99;"></div>
<div style="left:1156px;top:595px;width:152px;height:1px;background:#7a8a99;"></div>
<div class="t" style="left:1233.0px;top:579.37px;font:normal 13.5px 'Liberation Sans', sans-serif;line-height:13.5px;color:#444444;transform:translateX(-50%) scaleX(0.9050);transform-origin:center;">Value (+18)</div>
<div style="left:1308px;top:575px;width:152px;height:21px;background:#eeeeee;"></div>
<div style="left:1308px;top:575px;width:151px;height:1px;background:#ffffff;"></div>
<div style="left:1308px;top:575px;width:1px;height:20px;background:#ffffff;"></div>
<div style="left:1459px;top:575px;width:1px;height:21px;background:#7a8a99;"></div>
<div style="left:1308px;top:595px;width:152px;height:1px;background:#7a8a99;"></div>
<div class="t" style="left:1385.0px;top:579.37px;font:normal 13.5px 'Liberation Sans', sans-serif;line-height:13.5px;color:#444444;transform:translateX(-50%) scaleX(0.8959);transform-origin:center;">Value (+1c)</div>
<div style="left:1460px;top:575px;width:15px;height:21px;background:#eeeeee;"></div>
<div style="left:1460px;top:595px;width:15px;height:1px;background:#7a8a99;"></div>
<div style="left:91px;top:596px;width:153px;height:15px;background:#ffffff;"></div>
<div style="left:243px;top:596px;width:1px;height:16px;background:#7a8a99;"></div>
<div class="t" style="right:1840.5px;top:598.92px;font:normal 12.5px 'Liberation Mono', monospace;line-height:12.5px;color:#4a4a4a;letter-spacing:-0.5px;-webkit-text-stroke:0.2px #4a4a4a;">0x10010000</div>
<div style="left:244px;top:596px;width:152px;height:15px;background:#dddddd;"></div>
<div style="left:395px;top:596px;width:1px;height:16px;background:#7a8a99;"></div>
<div class="t" style="right:1688.5px;top:598.92px;font:normal 12.5px 'Liberation Mono', monospace;line-height:12.5px;color:#1a1a1a;letter-spacing:-0.5px;-webkit-text-stroke:0.2px #1a1a1a;">0x00000073</div>
<div style="left:396px;top:596px;width:152px;height:15px;background:#dddddd;"></div>
<div style="left:547px;top:596px;width:1px;height:16px;background:#7a8a99;"></div>
<div class="t" style="right:1536.5px;top:598.92px;font:normal 12.5px 'Liberation Mono', monospace;line-height:12.5px;color:#1a1a1a;letter-spacing:-0.5px;-webkit-text-stroke:0.2px #1a1a1a;">0x00000000</div>
<div style="left:548px;top:596px;width:152px;height:15px;background:#dddddd;"></div>
<div style="left:699px;top:596px;width:1px;height:16px;background:#7a8a99;"></div>
<div class="t" style="right:1384.5px;top:598.92px;font:normal 12.5px 'Liberation Mono', monospace;line-height:12.5px;color:#1a1a1a;letter-spacing:-0.5px;-webkit-text-stroke:0.2px #1a1a1a;">0x00000000</div>
<div style="left:700px;top:596px;width:152px;height:15px;background:#dddddd;"></div>
<div style="left:851px;top:596px;width:1px;height:16px;background:#7a8a99;"></div>
<div class="t" style="right:1232.5px;top:598.92px;font:normal 12.5px 'Liberation Mono', monospace;line-height:12.5px;color:#1a1a1a;letter-spacing:-0.5px;-webkit-text-stroke:0.2px #1a1a1a;">0x00000000</div>
<div style="left:852px;top:596px;width:152px;height:15px;background:#dddddd;"></div>
<div style="left:1003px;top:596px;width:1px;height:16px;background:#7a8a99;"></div>
<div class="t" style="right:1080.5px;top:598.92px;font:normal 12.5px 'Liberation Mono', monospace;line-height:12.5px;color:#1a1a1a;letter-spacing:-0.5px;-webkit-text-stroke:0.2px #1a1a1a;">0x00000000</div>
<div style="left:1004px;top:596px;width:152px;height:15px;background:#dddddd;"></div>
<div style="left:1155px;top:596px;width:1px;height:16px;background:#7a8a99;"></div>
<div class="t" style="right:928.5px;top:598.92px;font:normal 12.5px 'Liberation Mono', monospace;line-height:12.5px;color:#1a1a1a;letter-spacing:-0.5px;-webkit-text-stroke:0.2px #1a1a1a;">0x00000000</div>
<div style="left:1156px;top:596px;width:152px;height:15px;background:#dddddd;"></div>
<div style="left:1307px;top:596px;width:1px;height:16px;background:#7a8a99;"></div>
<div class="t" style="right:776.5px;top:598.92px;font:normal 12.5px 'Liberation Mono', monospace;line-height:12.5px;color:#1a1a1a;letter-spacing:-0.5px;-webkit-text-stroke:0.2px #1a1a1a;">0x00000000</div>
<div style="left:1308px;top:596px;width:152px;height:15px;background:#dddddd;"></div>
<div style="left:1459px;top:596px;width:1px;height:16px;background:#7a8a99;"></div>
<div class="t" style="right:624.5px;top:598.92px;font:normal 12.5px 'Liberation Mono', monospace;line-height:12.5px;color:#1a1a1a;letter-spacing:-0.5px;-webkit-text-stroke:0.2px #1a1a1a;">0x00000000</div>
<div style="left:91px;top:611px;width:1369px;height:1px;background:#7a8a99;"></div>
<div style="left:91px;top:612px;width:153px;height:15px;background:#ffffff;"></div>
<div style="left:243px;top:612px;width:1px;height:16px;background:#7a8a99;"></div>
<div class="t" style="right:1840.5px;top:614.92px;font:normal 12.5px 'Liberation Mono', monospace;line-height:12.5px;color:#4a4a4a;letter-spacing:-0.5px;-webkit-text-stroke:0.2px #4a4a4a;">0x10010020</div>
<div style="left:244px;top:612px;width:152px;height:15px;background:#ffffff;"></div>
<div style="left:395px;top:612px;width:1px;height:16px;background:#7a8a99;"></div>
<div class="t" style="right:1688.5px;top:614.92px;font:normal 12.5px 'Liberation Mono', monospace;line-height:12.5px;color:#1a1a1a;letter-spacing:-0.5px;-webkit-text-stroke:0.2px #1a1a1a;">0x00000000</div>
<div style="left:396px;top:612px;width:152px;height:15px;background:#ffffff;"></div>
<div style="left:547px;top:612px;width:1px;height:16px;background:#7a8a99;"></div>
<div class="t" style="right:1536.5px;top:614.92px;font:normal 12.5px 'Liberation Mono', monospace;line-height:12.5px;color:#1a1a1a;letter-spacing:-0.5px;-webkit-text-stroke:0.2px #1a1a1a;">0x00000000</div>
<div style="left:548px;top:612px;width:152px;height:15px;background:#ffffff;"></div>
<div style="left:699px;top:612px;width:1px;height:16px;background:#7a8a99;"></div>
<div class="t" style="right:1384.5px;top:614.92px;font:normal 12.5px 'Liberation Mono', monospace;line-height:12.5px;color:#1a1a1a;letter-spacing:-0.5px;-webkit-text-stroke:0.2px #1a1a1a;">0x00000000</div>
<div style="left:700px;top:612px;width:152px;height:15px;background:#ffffff;"></div>
<div style="left:851px;top:612px;width:1px;height:16px;background:#7a8a99;"></div>
<div class="t" style="right:1232.5px;top:614.92px;font:normal 12.5px 'Liberation Mono', monospace;line-height:12.5px;color:#1a1a1a;letter-spacing:-0.5px;-webkit-text-stroke:0.2px #1a1a1a;">0x00000000</div>
<div style="left:852px;top:612px;width:152px;height:15px;background:#ffffff;"></div>
<div style="left:1003px;top:612px;width:1px;height:16px;background:#7a8a99;"></div>
<div class="t" style="right:1080.5px;top:614.92px;font:normal 12.5px 'Liberation Mono', monospace;line-height:12.5px;color:#1a1a1a;letter-spacing:-0.5px;-webkit-text-stroke:0.2px #1a1a1a;">0x00000000</div>
<div style="left:1004px;top:612px;width:152px;height:15px;background:#ffffff;"></div>
<div style="left:1155px;top:612px;width:1px;height:16px;background:#7a8a99;"></div>
<div class="t" style="right:928.5px;top:614.92px;font:normal 12.5px 'Liberation Mono', monospace;line-height:12.5px;color:#1a1a1a;letter-spacing:-0.5px;-webkit-text-stroke:0.2px #1a1a1a;">0x00000000</div>
<div style="left:1156px;top:612px;width:152px;height:15px;background:#ffffff;"></div>
<div style="left:1307px;top:612px;width:1px;height:16px;background:#7a8a99;"></div>
<div class="t" style="right:776.5px;top:614.92px;font:normal 12.5px 'Liberation Mono', monospace;line-height:12.5px;color:#1a1a1a;letter-spacing:-0.5px;-webkit-text-stroke:0.2px #1a1a1a;">0x00000000</div>
<div style="left:1308px;top:612px;width:152px;height:15px;background:#ffffff;"></div>
<div style="left:1459px;top:612px;width:1px;height:16px;background:#7a8a99;"></div>
<div class="t" style="right:624.5px;top:614.92px;font:normal 12.5px 'Liberation Mono', monospace;line-height:12.5px;color:#1a1a1a;letter-spacing:-0.5px;-webkit-text-stroke:0.2px #1a1a1a;">0x00000000</div>
<div style="left:91px;top:627px;width:1369px;height:1px;background:#7a8a99;"></div>
<div style="left:91px;top:628px;width:153px;height:15px;background:#ffffff;"></div>
<div style="left:243px;top:628px;width:1px;height:16px;background:#7a8a99;"></div>
<div class="t" style="right:1840.5px;top:630.92px;font:normal 12.5px 'Liberation Mono', monospace;line-height:12.5px;color:#4a4a4a;letter-spacing:-0.5px;-webkit-text-stroke:0.2px #4a4a4a;">0x10010040</div>
<div style="left:244px;top:628px;width:152px;height:15px;background:#dddddd;"></div>
<div style="left:395px;top:628px;width:1px;height:16px;background:#7a8a99;"></div>
<div class="t" style="right:1688.5px;top:630.92px;font:normal 12.5px 'Liberation Mono', monospace;line-height:12.5px;color:#1a1a1a;letter-spacing:-0.5px;-webkit-text-stroke:0.2px #1a1a1a;">0x00000000</div>
<div style="left:396px;top:628px;width:152px;height:15px;background:#dddddd;"></div>
<div style="left:547px;top:628px;width:1px;height:16px;background:#7a8a99;"></div>
<div class="t" style="right:1536.5px;top:630.92px;font:normal 12.5px 'Liberation Mono', monospace;line-height:12.5px;color:#1a1a1a;letter-spacing:-0.5px;-webkit-text-stroke:0.2px #1a1a1a;">0x00000000</div>
<div style="left:548px;top:628px;width:152px;height:15px;background:#dddddd;"></div>
<div style="left:699px;top:628px;width:1px;height:16px;background:#7a8a99;"></div>
<div class="t" style="right:1384.5px;top:630.92px;font:normal 12.5px 'Liberation Mono', monospace;line-height:12.5px;color:#1a1a1a;letter-spacing:-0.5px;-webkit-text-stroke:0.2px #1a1a1a;">0x00000000</div>
<div style="left:700px;top:628px;width:152px;height:15px;background:#dddddd;"></div>
<div style="left:851px;top:628px;width:1px;height:16px;background:#7a8a99;"></div>
<div class="t" style="right:1232.5px;top:630.92px;font:normal 12.5px 'Liberation Mono', monospace;line-height:12.5px;color:#1a1a1a;letter-spacing:-0.5px;-webkit-text-stroke:0.2px #1a1a1a;">0x00000000</div>
<div style="left:852px;top:628px;width:152px;height:15px;background:#dddddd;"></div>
<div style="left:1003px;top:628px;width:1px;height:16px;background:#7a8a99;"></div>
<div class="t" style="right:1080.5px;top:630.92px;font:normal 12.5px 'Liberation Mono', monospace;line-height:12.5px;color:#1a1a1a;letter-spacing:-0.5px;-webkit-text-stroke:0.2px #1a1a1a;">0x00000000</div>
<div style="left:1004px;top:628px;width:152px;height:15px;background:#dddddd;"></div>
<div style="left:1155px;top:628px;width:1px;height:16px;background:#7a8a99;"></div>
<div class="t" style="right:928.5px;top:630.92px;font:normal 12.5px 'Liberation Mono', monospace;line-height:12.5px;color:#1a1a1a;letter-spacing:-0.5px;-webkit-text-stroke:0.2px #1a1a1a;">0x00000000</div>
<div style="left:1156px;top:628px;width:152px;height:15px;background:#dddddd;"></div>
<div style="left:1307px;top:628px;width:1px;height:16px;background:#7a8a99;"></div>
<div class="t" style="right:776.5px;top:630.92px;font:normal 12.5px 'Liberation Mono', monospace;line-height:12.5px;color:#1a1a1a;letter-spacing:-0.5px;-webkit-text-stroke:0.2px #1a1a1a;">0x00000000</div>
<div style="left:1308px;top:628px;width:152px;height:15px;background:#dddddd;"></div>
<div style="left:1459px;top:628px;width:1px;height:16px;background:#7a8a99;"></div>
<div class="t" style="right:624.5px;top:630.92px;font:normal 12.5px 'Liberation Mono', monospace;line-height:12.5px;color:#1a1a1a;letter-spacing:-0.5px;-webkit-text-stroke:0.2px #1a1a1a;">0x00000000</div>
<div style="left:91px;top:643px;width:1369px;height:1px;background:#7a8a99;"></div>
<div style="left:91px;top:644px;width:153px;height:15px;background:#ffffff;"></div>
<div style="left:243px;top:644px;width:1px;height:16px;background:#7a8a99;"></div>
<div class="t" style="right:1840.5px;top:646.92px;font:normal 12.5px 'Liberation Mono', monospace;line-height:12.5px;color:#4a4a4a;letter-spacing:-0.5px;-webkit-text-stroke:0.2px #4a4a4a;">0x10010060</div>
<div style="left:244px;top:644px;width:152px;height:15px;background:#ffffff;"></div>
<div style="left:395px;top:644px;width:1px;height:16px;background:#7a8a99;"></div>
<div class="t" style="right:1688.5px;top:646.92px;font:normal 12.5px 'Liberation Mono', monospace;line-height:12.5px;color:#1a1a1a;letter-spacing:-0.5px;-webkit-text-stroke:0.2px #1a1a1a;">0x00000000</div>
<div style="left:396px;top:644px;width:152px;height:15px;background:#ffffff;"></div>
<div style="left:547px;top:644px;width:1px;height:16px;background:#7a8a99;"></div>
<div class="t" style="right:1536.5px;top:646.92px;font:normal 12.5px 'Liberation Mono', monospace;line-height:12.5px;color:#1a1a1a;letter-spacing:-0.5px;-webkit-text-stroke:0.2px #1a1a1a;">0x00000000</div>
<div style="left:548px;top:644px;width:152px;height:15px;background:#ffffff;"></div>
<div style="left:699px;top:644px;width:1px;height:16px;background:#7a8a99;"></div>
<div class="t" style="right:1384.5px;top:646.92px;font:normal 12.5px 'Liberation Mono', monospace;line-height:12.5px;color:#1a1a1a;letter-spacing:-0.5px;-webkit-text-stroke:0.2px #1a1a1a;">0x00000000</div>
<div style="left:700px;top:644px;width:152px;height:15px;background:#ffffff;"></div>
<div style="left:851px;top:644px;width:1px;height:16px;background:#7a8a99;"></div>
<div class="t" style="right:1232.5px;top:646.92px;font:normal 12.5px 'Liberation Mono', monospace;line-height:12.5px;color:#1a1a1a;letter-spacing:-0.5px;-webkit-text-stroke:0.2px #1a1a1a;">0x00000000</div>
<div style="left:852px;top:644px;width:152px;height:15px;background:#ffffff;"></div>
<div style="left:1003px;top:644px;width:1px;height:16px;background:#7a8a99;"></div>
<div class="t" style="right:1080.5px;top:646.92px;font:normal 12.5px 'Liberation Mono', monospace;line-height:12.5px;color:#1a1a1a;letter-spacing:-0.5px;-webkit-text-stroke:0.2px #1a1a1a;">0x00000000</div>
<div style="left:1004px;top:644px;width:152px;height:15px;background:#ffffff;"></div>
<div style="left:1155px;top:644px;width:1px;height:16px;background:#7a8a99;"></div>
<div class="t" style="right:928.5px;top:646.92px;font:normal 12.5px 'Liberation Mono', monospace;line-height:12.5px;color:#1a1a1a;letter-spacing:-0.5px;-webkit-text-stroke:0.2px #1a1a1a;">0x00000000</div>
<div style="left:1156px;top:644px;width:152px;height:15px;background:#ffffff;"></div>
<div style="left:1307px;top:644px;width:1px;height:16px;background:#7a8a99;"></div>
<div class="t" style="right:776.5px;top:646.92px;font:normal 12.5px 'Liberation Mono', monospace;line-height:12.5px;color:#1a1a1a;letter-spacing:-0.5px;-webkit-text-stroke:0.2px #1a1a1a;">0x00000000</div>
<div style="left:1308px;top:644px;width:152px;height:15px;background:#ffffff;"></div>
<div style="left:1459px;top:644px;width:1px;height:16px;background:#7a8a99;"></div>
<div class="t" style="right:624.5px;top:646.92px;font:normal 12.5px 'Liberation Mono', monospace;line-height:12.5px;color:#1a1a1a;letter-spacing:-0.5px;-webkit-text-stroke:0.2px #1a1a1a;">0x00000000</div>
<div style="left:91px;top:659px;width:1369px;height:1px;background:#7a8a99;"></div>
<div style="left:91px;top:660px;width:153px;height:15px;background:#ffffff;"></div>
<div style="left:243px;top:660px;width:1px;height:16px;background:#7a8a99;"></div>
<div class="t" style="right:1840.5px;top:662.92px;font:normal 12.5px 'Liberation Mono', monospace;line-height:12.5px;color:#4a4a4a;letter-spacing:-0.5px;-webkit-text-stroke:0.2px #4a4a4a;">0x10010080</div>
<div style="left:244px;top:660px;width:152px;height:15px;background:#dddddd;"></div>
<div style="left:395px;top:660px;width:1px;height:16px;background:#7a8a99;"></div>
<div class="t" style="right:1688.5px;top:662.92px;font:normal 12.5px 'Liberation Mono', monospace;line-height:12.5px;color:#1a1a1a;letter-spacing:-0.5px;-webkit-text-stroke:0.2px #1a1a1a;">0x00000000</div>
<div style="left:396px;top:660px;width:152px;height:15px;background:#dddddd;"></div>
<div style="left:547px;top:660px;width:1px;height:16px;background:#7a8a99;"></div>
<div class="t" style="right:1536.5px;top:662.92px;font:normal 12.5px 'Liberation Mono', monospace;line-height:12.5px;color:#1a1a1a;letter-spacing:-0.5px;-webkit-text-stroke:0.2px #1a1a1a;">0x00000000</div>
<div style="left:548px;top:660px;width:152px;height:15px;background:#dddddd;"></div>
<div style="left:699px;top:660px;width:1px;height:16px;background:#7a8a99;"></div>
<div class="t" style="right:1384.5px;top:662.92px;font:normal 12.5px 'Liberation Mono', monospace;line-height:12.5px;color:#1a1a1a;letter-spacing:-0.5px;-webkit-text-stroke:0.2px #1a1a1a;">0x00000000</div>
<div style="left:700px;top:660px;width:152px;height:15px;background:#dddddd;"></div>
<div style="left:851px;top:660px;width:1px;height:16px;background:#7a8a99;"></div>
<div class="t" style="right:1232.5px;top:662.92px;font:normal 12.5px 'Liberation Mono', monospace;line-height:12.5px;color:#1a1a1a;letter-spacing:-0.5px;-webkit-text-stroke:0.2px #1a1a1a;">0x00000000</div>
<div style="left:852px;top:660px;width:152px;height:15px;background:#dddddd;"></div>
<div style="left:1003px;top:660px;width:1px;height:16px;background:#7a8a99;"></div>
<div class="t" style="right:1080.5px;top:662.92px;font:normal 12.5px 'Liberation Mono', monospace;line-height:12.5px;color:#1a1a1a;letter-spacing:-0.5px;-webkit-text-stroke:0.2px #1a1a1a;">0x00000000</div>
<div style="left:1004px;top:660px;width:152px;height:15px;background:#dddddd;"></div>
<div style="left:1155px;top:660px;width:1px;height:16px;background:#7a8a99;"></div>
<div class="t" style="right:928.5px;top:662.92px;font:normal 12.5px 'Liberation Mono', monospace;line-height:12.5px;color:#1a1a1a;letter-spacing:-0.5px;-webkit-text-stroke:0.2px #1a1a1a;">0x00000000</div>
<div style="left:1156px;top:660px;width:152px;height:15px;background:#dddddd;"></div>
<div style="left:1307px;top:660px;width:1px;height:16px;background:#7a8a99;"></div>
<div class="t" style="right:776.5px;top:662.92px;font:normal 12.5px 'Liberation Mono', monospace;line-height:12.5px;color:#1a1a1a;letter-spacing:-0.5px;-webkit-text-stroke:0.2px #1a1a1a;">0x00000000</div>
<div style="left:1308px;top:660px;width:152px;height:15px;background:#dddddd;"></div>
<div style="left:1459px;top:660px;width:1px;height:16px;background:#7a8a99;"></div>
<div class="t" style="right:624.5px;top:662.92px;font:normal 12.5px 'Liberation Mono', monospace;line-height:12.5px;color:#1a1a1a;letter-spacing:-0.5px;-webkit-text-stroke:0.2px #1a1a1a;">0x00000000</div>
<div style="left:91px;top:675px;width:1369px;height:1px;background:#7a8a99;"></div>
<div style="left:91px;top:676px;width:153px;height:15px;background:#ffffff;"></div>
<div style="left:243px;top:676px;width:1px;height:16px;background:#7a8a99;"></div>
<div class="t" style="right:1840.5px;top:678.92px;font:normal 12.5px 'Liberation Mono', monospace;line-height:12.5px;color:#4a4a4a;letter-spacing:-0.5px;-webkit-text-stroke:0.2px #4a4a4a;">0x100100a0</div>
<div style="left:244px;top:676px;width:152px;height:15px;background:#ffffff;"></div>
<div style="left:395px;top:676px;width:1px;height:16px;background:#7a8a99;"></div>
<div class="t" style="right:1688.5px;top:678.92px;font:normal 12.5px 'Liberation Mono', monospace;line-height:12.5px;color:#1a1a1a;letter-spacing:-0.5px;-webkit-text-stroke:0.2px #1a1a1a;">0x00000000</div>
<div style="left:396px;top:676px;width:152px;height:15px;background:#ffffff;"></div>
<div style="left:547px;top:676px;width:1px;height:16px;background:#7a8a99;"></div>
<div class="t" style="right:1536.5px;top:678.92px;font:normal 12.5px 'Liberation Mono', monospace;line-height:12.5px;color:#1a1a1a;letter-spacing:-0.5px;-webkit-text-stroke:0.2px #1a1a1a;">0x00000000</div>
<div style="left:548px;top:676px;width:152px;height:15px;background:#ffffff;"></div>
<div style="left:699px;top:676px;width:1px;height:16px;background:#7a8a99;"></div>
<div class="t" style="right:1384.5px;top:678.92px;font:normal 12.5px 'Liberation Mono', monospace;line-height:12.5px;color:#1a1a1a;letter-spacing:-0.5px;-webkit-text-stroke:0.2px #1a1a1a;">0x00000000</div>
<div style="left:700px;top:676px;width:152px;height:15px;background:#ffffff;"></div>
<div style="left:851px;top:676px;width:1px;height:16px;background:#7a8a99;"></div>
<div class="t" style="right:1232.5px;top:678.92px;font:normal 12.5px 'Liberation Mono', monospace;line-height:12.5px;color:#1a1a1a;letter-spacing:-0.5px;-webkit-text-stroke:0.2px #1a1a1a;">0x00000000</div>
<div style="left:852px;top:676px;width:152px;height:15px;background:#ffffff;"></div>
<div style="left:1003px;top:676px;width:1px;height:16px;background:#7a8a99;"></div>
<div class="t" style="right:1080.5px;top:678.92px;font:normal 12.5px 'Liberation Mono', monospace;line-height:12.5px;color:#1a1a1a;letter-spacing:-0.5px;-webkit-text-stroke:0.2px #1a1a1a;">0x00000000</div>
<div style="left:1004px;top:676px;width:152px;height:15px;background:#ffffff;"></div>
<div style="left:1155px;top:676px;width:1px;height:16px;background:#7a8a99;"></div>
<div class="t" style="right:928.5px;top:678.92px;font:normal 12.5px 'Liberation Mono', monospace;line-height:12.5px;color:#1a1a1a;letter-spacing:-0.5px;-webkit-text-stroke:0.2px #1a1a1a;">0x00000000</div>
<div style="left:1156px;top:676px;width:152px;height:15px;background:#ffffff;"></div>
<div style="left:1307px;top:676px;width:1px;height:16px;background:#7a8a99;"></div>
<div class="t" style="right:776.5px;top:678.92px;font:normal 12.5px 'Liberation Mono', monospace;line-height:12.5px;color:#1a1a1a;letter-spacing:-0.5px;-webkit-text-stroke:0.2px #1a1a1a;">0x00000000</div>
<div style="left:1308px;top:676px;width:152px;height:15px;background:#ffffff;"></div>
<div style="left:1459px;top:676px;width:1px;height:16px;background:#7a8a99;"></div>
<div class="t" style="right:624.5px;top:678.92px;font:normal 12.5px 'Liberation Mono', monospace;line-height:12.5px;color:#1a1a1a;letter-spacing:-0.5px;-webkit-text-stroke:0.2px #1a1a1a;">0x00000000</div>
<div style="left:91px;top:691px;width:1369px;height:1px;background:#7a8a99;"></div>
<div style="left:91px;top:692px;width:153px;height:15px;background:#ffffff;"></div>
<div style="left:243px;top:692px;width:1px;height:16px;background:#7a8a99;"></div>
<div class="t" style="right:1840.5px;top:694.92px;font:normal 12.5px 'Liberation Mono', monospace;line-height:12.5px;color:#4a4a4a;letter-spacing:-0.5px;-webkit-text-stroke:0.2px #4a4a4a;">0x100100c0</div>
<div style="left:244px;top:692px;width:152px;height:15px;background:#dddddd;"></div>
<div style="left:395px;top:692px;width:1px;height:16px;background:#7a8a99;"></div>
<div class="t" style="right:1688.5px;top:694.92px;font:normal 12.5px 'Liberation Mono', monospace;line-height:12.5px;color:#1a1a1a;letter-spacing:-0.5px;-webkit-text-stroke:0.2px #1a1a1a;">0x00000000</div>
<div style="left:396px;top:692px;width:152px;height:15px;background:#dddddd;"></div>
<div style="left:547px;top:692px;width:1px;height:16px;background:#7a8a99;"></div>
<div class="t" style="right:1536.5px;top:694.92px;font:normal 12.5px 'Liberation Mono', monospace;line-height:12.5px;color:#1a1a1a;letter-spacing:-0.5px;-webkit-text-stroke:0.2px #1a1a1a;">0x00000000</div>
<div style="left:548px;top:692px;width:152px;height:15px;background:#dddddd;"></div>
<div style="left:699px;top:692px;width:1px;height:16px;background:#7a8a99;"></div>
<div class="t" style="right:1384.5px;top:694.92px;font:normal 12.5px 'Liberation Mono', monospace;line-height:12.5px;color:#1a1a1a;letter-spacing:-0.5px;-webkit-text-stroke:0.2px #1a1a1a;">0x00000000</div>
<div style="left:700px;top:692px;width:152px;height:15px;background:#dddddd;"></div>
<div style="left:851px;top:692px;width:1px;height:16px;background:#7a8a99;"></div>
<div class="t" style="right:1232.5px;top:694.92px;font:normal 12.5px 'Liberation Mono', monospace;line-height:12.5px;color:#1a1a1a;letter-spacing:-0.5px;-webkit-text-stroke:0.2px #1a1a1a;">0x00000000</div>
<div style="left:852px;top:692px;width:152px;height:15px;background:#dddddd;"></div>
<div style="left:1003px;top:692px;width:1px;height:16px;background:#7a8a99;"></div>
<div class="t" style="right:1080.5px;top:694.92px;font:normal 12.5px 'Liberation Mono', monospace;line-height:12.5px;color:#1a1a1a;letter-spacing:-0.5px;-webkit-text-stroke:0.2px #1a1a1a;">0x00000000</div>
<div style="left:1004px;top:692px;width:152px;height:15px;background:#dddddd;"></div>
<div style="left:1155px;top:692px;width:1px;height:16px;background:#7a8a99;"></div>
<div class="t" style="right:928.5px;top:694.92px;font:normal 12.5px 'Liberation Mono', monospace;line-height:12.5px;color:#1a1a1a;letter-spacing:-0.5px;-webkit-text-stroke:0.2px #1a1a1a;">0x00000000</div>
<div style="left:1156px;top:692px;width:152px;height:15px;background:#dddddd;"></div>
<div style="left:1307px;top:692px;width:1px;height:16px;background:#7a8a99;"></div>
<div class="t" style="right:776.5px;top:694.92px;font:normal 12.5px 'Liberation Mono', monospace;line-height:12.5px;color:#1a1a1a;letter-spacing:-0.5px;-webkit-text-stroke:0.2px #1a1a1a;">0x00000000</div>
<div style="left:1308px;top:692px;width:152px;height:15px;background:#dddddd;"></div>
<div style="left:1459px;top:692px;width:1px;height:16px;background:#7a8a99;"></div>
<div class="t" style="right:624.5px;top:694.92px;font:normal 12.5px 'Liberation Mono', monospace;line-height:12.5px;color:#1a1a1a;letter-spacing:-0.5px;-webkit-text-stroke:0.2px #1a1a1a;">0x00000000</div>
<div style="left:91px;top:707px;width:1369px;height:1px;background:#7a8a99;"></div>
<div style="left:91px;top:708px;width:153px;height:15px;background:#ffffff;"></div>
<div style="left:243px;top:708px;width:1px;height:16px;background:#7a8a99;"></div>
<div class="t" style="right:1840.5px;top:710.92px;font:normal 12.5px 'Liberation Mono', monospace;line-height:12.5px;color:#4a4a4a;letter-spacing:-0.5px;-webkit-text-stroke:0.2px #4a4a4a;">0x100100e0</div>
<div style="left:244px;top:708px;width:152px;height:15px;background:#ffffff;"></div>
<div style="left:395px;top:708px;width:1px;height:16px;background:#7a8a99;"></div>
<div class="t" style="right:1688.5px;top:710.92px;font:normal 12.5px 'Liberation Mono', monospace;line-height:12.5px;color:#1a1a1a;letter-spacing:-0.5px;-webkit-text-stroke:0.2px #1a1a1a;">0x00000000</div>
<div style="left:396px;top:708px;width:152px;height:15px;background:#ffffff;"></div>
<div style="left:547px;top:708px;width:1px;height:16px;background:#7a8a99;"></div>
<div class="t" style="right:1536.5px;top:710.92px;font:normal 12.5px 'Liberation Mono', monospace;line-height:12.5px;color:#1a1a1a;letter-spacing:-0.5px;-webkit-text-stroke:0.2px #1a1a1a;">0x00000000</div>
<div style="left:548px;top:708px;width:152px;height:15px;background:#ffffff;"></div>
<div style="left:699px;top:708px;width:1px;height:16px;background:#7a8a99;"></div>
<div class="t" style="right:1384.5px;top:710.92px;font:normal 12.5px 'Liberation Mono', monospace;line-height:12.5px;color:#1a1a1a;letter-spacing:-0.5px;-webkit-text-stroke:0.2px #1a1a1a;">0x00000000</div>
<div style="left:700px;top:708px;width:152px;height:15px;background:#ffffff;"></div>
<div style="left:851px;top:708px;width:1px;height:16px;background:#7a8a99;"></div>
<div class="t" style="right:1232.5px;top:710.92px;font:normal 12.5px 'Liberation Mono', monospace;line-height:12.5px;color:#1a1a1a;letter-spacing:-0.5px;-webkit-text-stroke:0.2px #1a1a1a;">0x00000000</div>
<div style="left:852px;top:708px;width:152px;height:15px;background:#ffffff;"></div>
<div style="left:1003px;top:708px;width:1px;height:16px;background:#7a8a99;"></div>
<div class="t" style="right:1080.5px;top:710.92px;font:normal 12.5px 'Liberation Mono', monospace;line-height:12.5px;color:#1a1a1a;letter-spacing:-0.5px;-webkit-text-stroke:0.2px #1a1a1a;">0x00000000</div>
<div style="left:1004px;top:708px;width:152px;height:15px;background:#ffffff;"></div>
<div style="left:1155px;top:708px;width:1px;height:16px;background:#7a8a99;"></div>
<div class="t" style="right:928.5px;top:710.92px;font:normal 12.5px 'Liberation Mono', monospace;line-height:12.5px;color:#1a1a1a;letter-spacing:-0.5px;-webkit-text-stroke:0.2px #1a1a1a;">0x00000000</div>
<div style="left:1156px;top:708px;width:152px;height:15px;background:#ffffff;"></div>
<div style="left:1307px;top:708px;width:1px;height:16px;background:#7a8a99;"></div>
<div class="t" style="right:776.5px;top:710.92px;font:normal 12.5px 'Liberation Mono', monospace;line-height:12.5px;color:#1a1a1a;letter-spacing:-0.5px;-webkit-text-stroke:0.2px #1a1a1a;">0x00000000</div>
<div style="left:1308px;top:708px;width:152px;height:15px;background:#ffffff;"></div>
<div style="left:1459px;top:708px;width:1px;height:16px;background:#7a8a99;"></div>
<div class="t" style="right:624.5px;top:710.92px;font:normal 12.5px 'Liberation Mono', monospace;line-height:12.5px;color:#1a1a1a;letter-spacing:-0.5px;-webkit-text-stroke:0.2px #1a1a1a;">0x00000000</div>
<div style="left:91px;top:723px;width:1369px;height:1px;background:#7a8a99;"></div>
<div style="left:91px;top:724px;width:153px;height:15px;background:#ffffff;"></div>
<div style="left:243px;top:724px;width:1px;height:16px;background:#7a8a99;"></div>
<div class="t" style="right:1840.5px;top:726.92px;font:normal 12.5px 'Liberation Mono', monospace;line-height:12.5px;color:#4a4a4a;letter-spacing:-0.5px;-webkit-text-stroke:0.2px #4a4a4a;">0x10010100</div>
<div style="left:244px;top:724px;width:152px;height:15px;background:#dddddd;"></div>
<div style="left:395px;top:724px;width:1px;height:16px;background:#7a8a99;"></div>
<div class="t" style="right:1688.5px;top:726.92px;font:normal 12.5px 'Liberation Mono', monospace;line-height:12.5px;color:#1a1a1a;letter-spacing:-0.5px;-webkit-text-stroke:0.2px #1a1a1a;">0x00000000</div>
<div style="left:396px;top:724px;width:152px;height:15px;background:#dddddd;"></div>
<div style="left:547px;top:724px;width:1px;height:16px;background:#7a8a99;"></div>
<div class="t" style="right:1536.5px;top:726.92px;font:normal 12.5px 'Liberation Mono', monospace;line-height:12.5px;color:#1a1a1a;letter-spacing:-0.5px;-webkit-text-stroke:0.2px #1a1a1a;">0x00000000</div>
<div style="left:548px;top:724px;width:152px;height:15px;background:#dddddd;"></div>
<div style="left:699px;top:724px;width:1px;height:16px;background:#7a8a99;"></div>
<div class="t" style="right:1384.5px;top:726.92px;font:normal 12.5px 'Liberation Mono', monospace;line-height:12.5px;color:#1a1a1a;letter-spacing:-0.5px;-webkit-text-stroke:0.2px #1a1a1a;">0x00000000</div>
<div style="left:700px;top:724px;width:152px;height:15px;background:#dddddd;"></div>
<div style="left:851px;top:724px;width:1px;height:16px;background:#7a8a99;"></div>
<div class="t" style="right:1232.5px;top:726.92px;font:normal 12.5px 'Liberation Mono', monospace;line-height:12.5px;color:#1a1a1a;letter-spacing:-0.5px;-webkit-text-stroke:0.2px #1a1a1a;">0x00000000</div>
<div style="left:852px;top:724px;width:152px;height:15px;background:#dddddd;"></div>
<div style="left:1003px;top:724px;width:1px;height:16px;background:#7a8a99;"></div>
<div class="t" style="right:1080.5px;top:726.92px;font:normal 12.5px 'Liberation Mono', monospace;line-height:12.5px;color:#1a1a1a;letter-spacing:-0.5px;-webkit-text-stroke:0.2px #1a1a1a;">0x00000000</div>
<div style="left:1004px;top:724px;width:152px;height:15px;background:#dddddd;"></div>
<div style="left:1155px;top:724px;width:1px;height:16px;background:#7a8a99;"></div>
<div class="t" style="right:928.5px;top:726.92px;font:normal 12.5px 'Liberation Mono', monospace;line-height:12.5px;color:#1a1a1a;letter-spacing:-0.5px;-webkit-text-stroke:0.2px #1a1a1a;">0x00000000</div>
<div style="left:1156px;top:724px;width:152px;height:15px;background:#dddddd;"></div>
<div style="left:1307px;top:724px;width:1px;height:16px;background:#7a8a99;"></div>
<div class="t" style="right:776.5px;top:726.92px;font:normal 12.5px 'Liberation Mono', monospace;line-height:12.5px;color:#1a1a1a;letter-spacing:-0.5px;-webkit-text-stroke:0.2px #1a1a1a;">0x00000000</div>
<div style="left:1308px;top:724px;width:152px;height:15px;background:#dddddd;"></div>
<div style="left:1459px;top:724px;width:1px;height:16px;background:#7a8a99;"></div>
<div class="t" style="right:624.5px;top:726.92px;font:normal 12.5px 'Liberation Mono', monospace;line-height:12.5px;color:#1a1a1a;letter-spacing:-0.5px;-webkit-text-stroke:0.2px #1a1a1a;">0x00000000</div>
<div style="left:91px;top:739px;width:1369px;height:1px;background:#7a8a99;"></div>
<div style="left:91px;top:740px;width:153px;height:15px;background:#ffffff;"></div>
<div style="left:243px;top:740px;width:1px;height:16px;background:#7a8a99;"></div>
<div class="t" style="right:1840.5px;top:742.92px;font:normal 12.5px 'Liberation Mono', monospace;line-height:12.5px;color:#4a4a4a;letter-spacing:-0.5px;-webkit-text-stroke:0.2px #4a4a4a;">0x10010120</div>
<div style="left:244px;top:740px;width:152px;height:15px;background:#ffffff;"></div>
<div style="left:395px;top:740px;width:1px;height:16px;background:#7a8a99;"></div>
<div class="t" style="right:1688.5px;top:742.92px;font:normal 12.5px 'Liberation Mono', monospace;line-height:12.5px;color:#1a1a1a;letter-spacing:-0.5px;-webkit-text-stroke:0.2px #1a1a1a;">0x00000000</div>
<div style="left:396px;top:740px;width:152px;height:15px;background:#ffffff;"></div>
<div style="left:547px;top:740px;width:1px;height:16px;background:#7a8a99;"></div>
<div class="t" style="right:1536.5px;top:742.92px;font:normal 12.5px 'Liberation Mono', monospace;line-height:12.5px;color:#1a1a1a;letter-spacing:-0.5px;-webkit-text-stroke:0.2px #1a1a1a;">0x00000000</div>
<div style="left:548px;top:740px;width:152px;height:15px;background:#ffffff;"></div>
<div style="left:699px;top:740px;width:1px;height:16px;background:#7a8a99;"></div>
<div class="t" style="right:1384.5px;top:742.92px;font:normal 12.5px 'Liberation Mono', monospace;line-height:12.5px;color:#1a1a1a;letter-spacing:-0.5px;-webkit-text-stroke:0.2px #1a1a1a;">0x00000000</div>
<div style="left:700px;top:740px;width:152px;height:15px;background:#ffffff;"></div>
<div style="left:851px;top:740px;width:1px;height:16px;background:#7a8a99;"></div>
<div class="t" style="right:1232.5px;top:742.92px;font:normal 12.5px 'Liberation Mono', monospace;line-height:12.5px;color:#1a1a1a;letter-spacing:-0.5px;-webkit-text-stroke:0.2px #1a1a1a;">0x00000000</div>
<div style="left:852px;top:740px;width:152px;height:15px;background:#ffffff;"></div>
<div style="left:1003px;top:740px;width:1px;height:16px;background:#7a8a99;"></div>
<div class="t" style="right:1080.5px;top:742.92px;font:normal 12.5px 'Liberation Mono', monospace;line-height:12.5px;color:#1a1a1a;letter-spacing:-0.5px;-webkit-text-stroke:0.2px #1a1a1a;">0x00000000</div>
<div style="left:1004px;top:740px;width:152px;height:15px;background:#ffffff;"></div>
<div style="left:1155px;top:740px;width:1px;height:16px;background:#7a8a99;"></div>
<div class="t" style="right:928.5px;top:742.92px;font:normal 12.5px 'Liberation Mono', monospace;line-height:12.5px;color:#1a1a1a;letter-spacing:-0.5px;-webkit-text-stroke:0.2px #1a1a1a;">0x00000000</div>
<div style="left:1156px;top:740px;width:152px;height:15px;background:#ffffff;"></div>
<div style="left:1307px;top:740px;width:1px;height:16px;background:#7a8a99;"></div>
<div class="t" style="right:776.5px;top:742.92px;font:normal 12.5px 'Liberation Mono', monospace;line-height:12.5px;color:#1a1a1a;letter-spacing:-0.5px;-webkit-text-stroke:0.2px #1a1a1a;">0x00000000</div>
<div style="left:1308px;top:740px;width:152px;height:15px;background:#ffffff;"></div>
<div style="left:1459px;top:740px;width:1px;height:16px;background:#7a8a99;"></div>
<div class="t" style="right:624.5px;top:742.92px;font:normal 12.5px 'Liberation Mono', monospace;line-height:12.5px;color:#1a1a1a;letter-spacing:-0.5px;-webkit-text-stroke:0.2px #1a1a1a;">0x00000000</div>
<div style="left:91px;top:755px;width:1369px;height:1px;background:#7a8a99;"></div>
<div style="left:91px;top:756px;width:153px;height:15px;background:#ffffff;"></div>
<div style="left:243px;top:756px;width:1px;height:16px;background:#7a8a99;"></div>
<div class="t" style="right:1840.5px;top:758.92px;font:normal 12.5px 'Liberation Mono', monospace;line-height:12.5px;color:#4a4a4a;letter-spacing:-0.5px;-webkit-text-stroke:0.2px #4a4a4a;">0x10010140</div>
<div style="left:244px;top:756px;width:152px;height:15px;background:#dddddd;"></div>
<div style="left:395px;top:756px;width:1px;height:16px;background:#7a8a99;"></div>
<div class="t" style="right:1688.5px;top:758.92px;font:normal 12.5px 'Liberation Mono', monospace;line-height:12.5px;color:#1a1a1a;letter-spacing:-0.5px;-webkit-text-stroke:0.2px #1a1a1a;">0x00000000</div>
<div style="left:396px;top:756px;width:152px;height:15px;background:#dddddd;"></div>
<div style="left:547px;top:756px;width:1px;height:16px;background:#7a8a99;"></div>
<div class="t" style="right:1536.5px;top:758.92px;font:normal 12.5px 'Liberation Mono', monospace;line-height:12.5px;color:#1a1a1a;letter-spacing:-0.5px;-webkit-text-stroke:0.2px #1a1a1a;">0x00000000</div>
<div style="left:548px;top:756px;width:152px;height:15px;background:#dddddd;"></div>
<div style="left:699px;top:756px;width:1px;height:16px;background:#7a8a99;"></div>
<div class="t" style="right:1384.5px;top:758.92px;font:normal 12.5px 'Liberation Mono', monospace;line-height:12.5px;color:#1a1a1a;letter-spacing:-0.5px;-webkit-text-stroke:0.2px #1a1a1a;">0x00000000</div>
<div style="left:700px;top:756px;width:152px;height:15px;background:#dddddd;"></div>
<div style="left:851px;top:756px;width:1px;height:16px;background:#7a8a99;"></div>
<div class="t" style="right:1232.5px;top:758.92px;font:normal 12.5px 'Liberation Mono', monospace;line-height:12.5px;color:#1a1a1a;letter-spacing:-0.5px;-webkit-text-stroke:0.2px #1a1a1a;">0x00000000</div>
<div style="left:852px;top:756px;width:152px;height:15px;background:#dddddd;"></div>
<div style="left:1003px;top:756px;width:1px;height:16px;background:#7a8a99;"></div>
<div class="t" style="right:1080.5px;top:758.92px;font:normal 12.5px 'Liberation Mono', monospace;line-height:12.5px;color:#1a1a1a;letter-spacing:-0.5px;-webkit-text-stroke:0.2px #1a1a1a;">0x00000000</div>
<div style="left:1004px;top:756px;width:152px;height:15px;background:#dddddd;"></div>
<div style="left:1155px;top:756px;width:1px;height:16px;background:#7a8a99;"></div>
<div class="t" style="right:928.5px;top:758.92px;font:normal 12.5px 'Liberation Mono', monospace;line-height:12.5px;color:#1a1a1a;letter-spacing:-0.5px;-webkit-text-stroke:0.2px #1a1a1a;">0x00000000</div>
<div style="left:1156px;top:756px;width:152px;height:15px;background:#dddddd;"></div>
<div style="left:1307px;top:756px;width:1px;height:16px;background:#7a8a99;"></div>
<div class="t" style="right:776.5px;top:758.92px;font:normal 12.5px 'Liberation Mono', monospace;line-height:12.5px;color:#1a1a1a;letter-spacing:-0.5px;-webkit-text-stroke:0.2px #1a1a1a;">0x00000000</div>
<div style="left:1308px;top:756px;width:152px;height:15px;background:#dddddd;"></div>
<div style="left:1459px;top:756px;width:1px;height:16px;background:#7a8a99;"></div>
<div class="t" style="right:624.5px;top:758.92px;font:normal 12.5px 'Liberation Mono', monospace;line-height:12.5px;color:#1a1a1a;letter-spacing:-0.5px;-webkit-text-stroke:0.2px #1a1a1a;">0x00000000</div>
<div style="left:91px;top:771px;width:1369px;height:1px;background:#7a8a99;"></div>
<div style="left:91px;top:772px;width:153px;height:15px;background:#ffffff;"></div>
<div style="left:243px;top:772px;width:1px;height:16px;background:#7a8a99;"></div>
<div class="t" style="right:1840.5px;top:774.92px;font:normal 12.5px 'Liberation Mono', monospace;line-height:12.5px;color:#4a4a4a;letter-spacing:-0.5px;-webkit-text-stroke:0.2px #4a4a4a;">0x10010160</div>
<div style="left:244px;top:772px;width:152px;height:15px;background:#ffffff;"></div>
<div style="left:395px;top:772px;width:1px;height:16px;background:#7a8a99;"></div>
<div class="t" style="right:1688.5px;top:774.92px;font:normal 12.5px 'Liberation Mono', monospace;line-height:12.5px;color:#1a1a1a;letter-spacing:-0.5px;-webkit-text-stroke:0.2px #1a1a1a;">0x00000000</div>
<div style="left:396px;top:772px;width:152px;height:15px;background:#ffffff;"></div>
<div style="left:547px;top:772px;width:1px;height:16px;background:#7a8a99;"></div>
<div class="t" style="right:1536.5px;top:774.92px;font:normal 12.5px 'Liberation Mono', monospace;line-height:12.5px;color:#1a1a1a;letter-spacing:-0.5px;-webkit-text-stroke:0.2px #1a1a1a;">0x00000000</div>
<div style="left:548px;top:772px;width:152px;height:15px;background:#ffffff;"></div>
<div style="left:699px;top:772px;width:1px;height:16px;background:#7a8a99;"></div>
<div class="t" style="right:1384.5px;top:774.92px;font:normal 12.5px 'Liberation Mono', monospace;line-height:12.5px;color:#1a1a1a;letter-spacing:-0.5px;-webkit-text-stroke:0.2px #1a1a1a;">0x00000000</div>
<div style="left:700px;top:772px;width:152px;height:15px;background:#ffffff;"></div>
<div style="left:851px;top:772px;width:1px;height:16px;background:#7a8a99;"></div>
<div class="t" style="right:1232.5px;top:774.92px;font:normal 12.5px 'Liberation Mono', monospace;line-height:12.5px;color:#1a1a1a;letter-spacing:-0.5px;-webkit-text-stroke:0.2px #1a1a1a;">0x00000000</div>
<div style="left:852px;top:772px;width:152px;height:15px;background:#ffffff;"></div>
<div style="left:1003px;top:772px;width:1px;height:16px;background:#7a8a99;"></div>
<div class="t" style="right:1080.5px;top:774.92px;font:normal 12.5px 'Liberation Mono', monospace;line-height:12.5px;color:#1a1a1a;letter-spacing:-0.5px;-webkit-text-stroke:0.2px #1a1a1a;">0x00000000</div>
<div style="left:1004px;top:772px;width:152px;height:15px;background:#ffffff;"></div>
<div style="left:1155px;top:772px;width:1px;height:16px;background:#7a8a99;"></div>
<div class="t" style="right:928.5px;top:774.92px;font:normal 12.5px 'Liberation Mono', monospace;line-height:12.5px;color:#1a1a1a;letter-spacing:-0.5px;-webkit-text-stroke:0.2px #1a1a1a;">0x00000000</div>
<div style="left:1156px;top:772px;width:152px;height:15px;background:#ffffff;"></div>
<div style="left:1307px;top:772px;width:1px;height:16px;background:#7a8a99;"></div>
<div class="t" style="right:776.5px;top:774.92px;font:normal 12.5px 'Liberation Mono', monospace;line-height:12.5px;color:#1a1a1a;letter-spacing:-0.5px;-webkit-text-stroke:0.2px #1a1a1a;">0x00000000</div>
<div style="left:1308px;top:772px;width:152px;height:15px;background:#ffffff;"></div>
<div style="left:1459px;top:772px;width:1px;height:16px;background:#7a8a99;"></div>
<div class="t" style="right:624.5px;top:774.92px;font:normal 12.5px 'Liberation Mono', monospace;line-height:12.5px;color:#1a1a1a;letter-spacing:-0.5px;-webkit-text-stroke:0.2px #1a1a1a;">0x00000000</div>
<div style="left:91px;top:787px;width:1369px;height:1px;background:#7a8a99;"></div>
<div style="left:91px;top:788px;width:153px;height:15px;background:#ffffff;"></div>
<div style="left:243px;top:788px;width:1px;height:16px;background:#7a8a99;"></div>
<div class="t" style="right:1840.5px;top:790.92px;font:normal 12.5px 'Liberation Mono', monospace;line-height:12.5px;color:#4a4a4a;letter-spacing:-0.5px;-webkit-text-stroke:0.2px #4a4a4a;">0x10010180</div>
<div style="left:244px;top:788px;width:152px;height:15px;background:#dddddd;"></div>
<div style="left:395px;top:788px;width:1px;height:16px;background:#7a8a99;"></div>
<div class="t" style="right:1688.5px;top:790.92px;font:normal 12.5px 'Liberation Mono', monospace;line-height:12.5px;color:#1a1a1a;letter-spacing:-0.5px;-webkit-text-stroke:0.2px #1a1a1a;">0x00000000</div>
<div style="left:396px;top:788px;width:152px;height:15px;background:#dddddd;"></div>
<div style="left:547px;top:788px;width:1px;height:16px;background:#7a8a99;"></div>
<div class="t" style="right:1536.5px;top:790.92px;font:normal 12.5px 'Liberation Mono', monospace;line-height:12.5px;color:#1a1a1a;letter-spacing:-0.5px;-webkit-text-stroke:0.2px #1a1a1a;">0x00000000</div>
<div style="left:548px;top:788px;width:152px;height:15px;background:#dddddd;"></div>
<div style="left:699px;top:788px;width:1px;height:16px;background:#7a8a99;"></div>
<div class="t" style="right:1384.5px;top:790.92px;font:normal 12.5px 'Liberation Mono', monospace;line-height:12.5px;color:#1a1a1a;letter-spacing:-0.5px;-webkit-text-stroke:0.2px #1a1a1a;">0x00000000</div>
<div style="left:700px;top:788px;width:152px;height:15px;background:#dddddd;"></div>
<div style="left:851px;top:788px;width:1px;height:16px;background:#7a8a99;"></div>
<div class="t" style="right:1232.5px;top:790.92px;font:normal 12.5px 'Liberation Mono', monospace;line-height:12.5px;color:#1a1a1a;letter-spacing:-0.5px;-webkit-text-stroke:0.2px #1a1a1a;">0x00000000</div>
<div style="left:852px;top:788px;width:152px;height:15px;background:#dddddd;"></div>
<div style="left:1003px;top:788px;width:1px;height:16px;background:#7a8a99;"></div>
<div class="t" style="right:1080.5px;top:790.92px;font:normal 12.5px 'Liberation Mono', monospace;line-height:12.5px;color:#1a1a1a;letter-spacing:-0.5px;-webkit-text-stroke:0.2px #1a1a1a;">0x00000000</div>
<div style="left:1004px;top:788px;width:152px;height:15px;background:#dddddd;"></div>
<div style="left:1155px;top:788px;width:1px;height:16px;background:#7a8a99;"></div>
<div class="t" style="right:928.5px;top:790.92px;font:normal 12.5px 'Liberation Mono', monospace;line-height:12.5px;color:#1a1a1a;letter-spacing:-0.5px;-webkit-text-stroke:0.2px #1a1a1a;">0x00000000</div>
<div style="left:1156px;top:788px;width:152px;height:15px;background:#dddddd;"></div>
<div style="left:1307px;top:788px;width:1px;height:16px;background:#7a8a99;"></div>
<div class="t" style="right:776.5px;top:790.92px;font:normal 12.5px 'Liberation Mono', monospace;line-height:12.5px;color:#1a1a1a;letter-spacing:-0.5px;-webkit-text-stroke:0.2px #1a1a1a;">0x00000000</div>
<div style="left:1308px;top:788px;width:152px;height:15px;background:#dddddd;"></div>
<div style="left:1459px;top:788px;width:1px;height:16px;background:#7a8a99;"></div>
<div class="t" style="right:624.5px;top:790.92px;font:normal 12.5px 'Liberation Mono', monospace;line-height:12.5px;color:#1a1a1a;letter-spacing:-0.5px;-webkit-text-stroke:0.2px #1a1a1a;">0x00000000</div>
<div style="left:91px;top:803px;width:1369px;height:1px;background:#7a8a99;"></div>
<div style="left:91px;top:804px;width:153px;height:15px;background:#ffffff;"></div>
<div style="left:243px;top:804px;width:1px;height:16px;background:#7a8a99;"></div>
<div class="t" style="right:1840.5px;top:806.92px;font:normal 12.5px 'Liberation Mono', monospace;line-height:12.5px;color:#4a4a4a;letter-spacing:-0.5px;-webkit-text-stroke:0.2px #4a4a4a;">0x100101a0</div>
<div style="left:244px;top:804px;width:152px;height:15px;background:#ffffff;"></div>
<div style="left:395px;top:804px;width:1px;height:16px;background:#7a8a99;"></div>
<div class="t" style="right:1688.5px;top:806.92px;font:normal 12.5px 'Liberation Mono', monospace;line-height:12.5px;color:#1a1a1a;letter-spacing:-0.5px;-webkit-text-stroke:0.2px #1a1a1a;">0x00000000</div>
<div style="left:396px;top:804px;width:152px;height:15px;background:#ffffff;"></div>
<div style="left:547px;top:804px;width:1px;height:16px;background:#7a8a99;"></div>
<div class="t" style="right:1536.5px;top:806.92px;font:normal 12.5px 'Liberation Mono', monospace;line-height:12.5px;color:#1a1a1a;letter-spacing:-0.5px;-webkit-text-stroke:0.2px #1a1a1a;">0x00000000</div>
<div style="left:548px;top:804px;width:152px;height:15px;background:#ffffff;"></div>
<div style="left:699px;top:804px;width:1px;height:16px;background:#7a8a99;"></div>
<div class="t" style="right:1384.5px;top:806.92px;font:normal 12.5px 'Liberation Mono', monospace;line-height:12.5px;color:#1a1a1a;letter-spacing:-0.5px;-webkit-text-stroke:0.2px #1a1a1a;">0x00000000</div>
<div style="left:700px;top:804px;width:152px;height:15px;background:#ffffff;"></div>
<div style="left:851px;top:804px;width:1px;height:16px;background:#7a8a99;"></div>
<div class="t" style="right:1232.5px;top:806.92px;font:normal 12.5px 'Liberation Mono', monospace;line-height:12.5px;color:#1a1a1a;letter-spacing:-0.5px;-webkit-text-stroke:0.2px #1a1a1a;">0x00000000</div>
<div style="left:852px;top:804px;width:152px;height:15px;background:#ffffff;"></div>
<div style="left:1003px;top:804px;width:1px;height:16px;background:#7a8a99;"></div>
<div class="t" style="right:1080.5px;top:806.92px;font:normal 12.5px 'Liberation Mono', monospace;line-height:12.5px;color:#1a1a1a;letter-spacing:-0.5px;-webkit-text-stroke:0.2px #1a1a1a;">0x00000000</div>
<div style="left:1004px;top:804px;width:152px;height:15px;background:#ffffff;"></div>
<div style="left:1155px;top:804px;width:1px;height:16px;background:#7a8a99;"></div>
<div class="t" style="right:928.5px;top:806.92px;font:normal 12.5px 'Liberation Mono', monospace;line-height:12.5px;color:#1a1a1a;letter-spacing:-0.5px;-webkit-text-stroke:0.2px #1a1a1a;">0x00000000</div>
<div style="left:1156px;top:804px;width:152px;height:15px;background:#ffffff;"></div>
<div style="left:1307px;top:804px;width:1px;height:16px;background:#7a8a99;"></div>
<div class="t" style="right:776.5px;top:806.92px;font:normal 12.5px 'Liberation Mono', monospace;line-height:12.5px;color:#1a1a1a;letter-spacing:-0.5px;-webkit-text-stroke:0.2px #1a1a1a;">0x00000000</div>
<div style="left:1308px;top:804px;width:152px;height:15px;background:#ffffff;"></div>
<div style="left:1459px;top:804px;width:1px;height:16px;background:#7a8a99;"></div>
<div class="t" style="right:624.5px;top:806.92px;font:normal 12.5px 'Liberation Mono', monospace;line-height:12.5px;color:#1a1a1a;letter-spacing:-0.5px;-webkit-text-stroke:0.2px #1a1a1a;">0x00000000</div>
<div style="left:91px;top:819px;width:1369px;height:1px;background:#7a8a99;"></div>
<div style="left:91px;top:820px;width:153px;height:3px;background:#ffffff;"></div>
<div style="left:243px;top:820px;width:1px;height:3px;background:#7a8a99;"></div>
<div style="left:244px;top:820px;width:152px;height:3px;background:#dddddd;"></div>
<div style="left:395px;top:820px;width:1px;height:3px;background:#7a8a99;"></div>
<div style="left:396px;top:820px;width:152px;height:3px;background:#dddddd;"></div>
<div style="left:547px;top:820px;width:1px;height:3px;background:#7a8a99;"></div>
<div style="left:548px;top:820px;width:152px;height:3px;background:#dddddd;"></div>
<div style="left:699px;top:820px;width:1px;height:3px;background:#7a8a99;"></div>
<div style="left:700px;top:820px;width:152px;height:3px;background:#dddddd;"></div>
<div style="left:851px;top:820px;width:1px;height:3px;background:#7a8a99;"></div>
<div style="left:852px;top:820px;width:152px;height:3px;background:#dddddd;"></div>
<div style="left:1003px;top:820px;width:1px;height:3px;background:#7a8a99;"></div>
<div style="left:1004px;top:820px;width:152px;height:3px;background:#dddddd;"></div>
<div style="left:1155px;top:820px;width:1px;height:3px;background:#7a8a99;"></div>
<div style="left:1156px;top:820px;width:152px;height:3px;background:#dddddd;"></div>
<div style="left:1307px;top:820px;width:1px;height:3px;background:#7a8a99;"></div>
<div style="left:1308px;top:820px;width:152px;height:3px;background:#dddddd;"></div>
<div style="left:1459px;top:820px;width:1px;height:3px;background:#7a8a99;"></div>
<div style="left:1460px;top:596px;width:16px;height:227px;background:#eeeeee;"></div>
<div style="left:1460px;top:596px;width:1px;height:227px;background:#7a8a99;"></div>
<div style="left:1475px;top:596px;width:1px;height:227px;background:#7a8a99;"></div>
<div style="left:1461px;top:596px;width:1px;height:227px;background:#ffffff;"></div>
<div style="left:1461px;top:611px;width:14px;height:1px;background:#7a8a99;"></div>
<div style="left:1461px;top:596px;width:14px;height:1px;background:#ffffff;"></div>
<svg style="left:1463px;top:600px;" width="10" height="7" viewBox="0 0 10 7"><path d="M0.5 5.5 L4.5 1 L8.5 5.5 Z" fill="#333"/></svg>
<div style="left:1461px;top:807px;width:14px;height:1px;background:#7a8a99;"></div>
<div style="left:1461px;top:808px;width:14px;height:1px;background:#ffffff;"></div>
<svg style="left:1463px;top:812px;" width="10" height="7" viewBox="0 0 10 7"><path d="M0.5 1 L4.5 5.5 L8.5 1 Z" fill="#333"/></svg>
<div style="left:1461px;top:611px;width:15px;height:175px;box-sizing:border-box;border:1px solid #6382bf;background:linear-gradient(90deg,#dde8f3 0%,#ffffff 25%,#e6eef8 50%,#b8cfe5 100%);"></div>
<div style="left:1464px;top:694px;width:8px;height:1px;background:#6382bf;"></div>
<div style="left:1464px;top:697px;width:8px;height:1px;background:#6382bf;"></div>
<div style="left:1464px;top:700px;width:8px;height:1px;background:#6382bf;"></div>
<div style="left:91px;top:823px;width:1369px;height:16px;background:#eeeeee;"></div>
<div style="left:91px;top:823px;width:1369px;height:1px;background:#7a8a99;"></div>
<div style="left:91px;top:838px;width:1369px;height:1px;background:#7a8a99;"></div>
<div style="left:91px;top:824px;width:1369px;height:1px;background:#ffffff;"></div>
<div style="left:106px;top:824px;width:1px;height:14px;background:#7a8a99;"></div>
<div style="left:107px;top:824px;width:1px;height:14px;background:#ffffff;"></div>
<svg style="left:95px;top:826.0px;" width="7" height="10" viewBox="0 0 7 10"><path d="M5 0.5 L1 4.5 L5 8.5 Z" fill="#222"/></svg>
<div style="left:1444px;top:824px;width:1px;height:14px;background:#7a8a99;"></div>
<div style="left:1445px;top:824px;width:1px;height:14px;background:#ffffff;"></div>
<svg style="left:1450px;top:825.5px;" width="7" height="10" viewBox="0 0 7 10"><path d="M1 0.5 L5 4.5 L1 8.5 Z" fill="#222"/></svg>
<div style="left:1460px;top:824px;width:15px;height:14px;background:#eeeeee;"></div>
<div style="left:1459px;top:823px;width:17px;height:1px;background:#7a8a99;"></div>
<div style="left:1460px;top:823px;width:1px;height:16px;background:#7a8a99;"></div>
<div style="left:462px;top:845px;width:51px;height:26px;box-sizing:border-box;border:1px solid #7a8a99;background:linear-gradient(#dde8f3 0%,#ffffff 30%,#e8eff8 45%,#b8cfe5 100%);"></div>
<div style="left:512px;top:845px;width:51px;height:26px;box-sizing:border-box;border:1px solid #7a8a99;background:linear-gradient(#dde8f3 0%,#ffffff 30%,#e8eff8 45%,#b8cfe5 100%);"></div>
<svg style="left:479px;top:849px;" width="18" height="18" viewBox="0 0 18 18"><path d="M1.5 9 L9 1.5 V5.5 H16 V12.5 H9 V16.5 Z" fill="#7fcc3a" stroke="#3f8f1f" stroke-width="1.2"/></svg>
<svg style="left:528px;top:849px;" width="18" height="18" viewBox="0 0 18 18"><path d="M16.5 9 L9 1.5 V5.5 H2 V12.5 H9 V16.5 Z" fill="#7fcc3a" stroke="#3f8f1f" stroke-width="1.2"/></svg>
<div style="left:567px;top:845px;width:152px;height:26px;box-sizing:border-box;border:1px solid #7a8a99;background:#eeeeee;box-shadow:inset 1px 1px 0 #ffffff;"></div>
<div style="left:699px;top:846px;width:1px;height:24px;background:#7a8a99;"></div>
<div style="left:700px;top:846px;width:18px;height:24px;box-sizing:border-box;border:1px solid #7a8a99;background:linear-gradient(#dde8f3 0%,#ffffff 30%,#e8eff8 45%,#b8cfe5 100%);border:none;"></div>
<svg style="left:702px;top:855px;" width="14" height="8" viewBox="0 0 14 8"><path d="M1 1 H12 L6.5 6.5 Z" fill="#222"/></svg>
<div class="t" style="left:570.6px;top:852.42px;font:bold 12.5px 'Liberation Sans', sans-serif;line-height:12.5px;color:#333;transform:scaleX(1.0045);transform-origin:left;">0x10010000 (.data)</div>
<div style="left:727px;top:851px;width:13px;height:13px;box-sizing:border-box;border:1px solid #7a8a99;background:linear-gradient(#ffffff,#c8daef);"></div>
<svg style="left:727px;top:851px;" width="13" height="13" viewBox="0 0 13 13"><path d="M3.2 5.4 H5.3 V8.3 L10.2 3 L11.7 4.3 L5.3 10.6 H3.4 Z" fill="#222"/></svg>
<div class="t" style="left:745px;top:852.42px;font:bold 12.5px 'Liberation Sans', sans-serif;line-height:12.5px;color:#333;transform:scaleX(0.9848);transform-origin:left;">Hexadecimal Addresses</div>
<div style="left:899px;top:851px;width:13px;height:13px;box-sizing:border-box;border:1px solid #7a8a99;background:linear-gradient(#ffffff,#c8daef);"></div>
<svg style="left:899px;top:851px;" width="13" height="13" viewBox="0 0 13 13"><path d="M3.2 5.4 H5.3 V8.3 L10.2 3 L11.7 4.3 L5.3 10.6 H3.4 Z" fill="#222"/></svg>
<div class="t" style="left:917px;top:852.42px;font:bold 12.5px 'Liberation Sans', sans-serif;line-height:12.5px;color:#333;transform:scaleX(1.0039);transform-origin:left;">Hexadecimal Values</div>
<div style="left:1050px;top:851px;width:13px;height:13px;box-sizing:border-box;border:1px solid #7a8a99;background:linear-gradient(#ffffff,#c8daef);"></div>
<div class="t" style="left:1067.7px;top:852.42px;font:bold 12.5px 'Liberation Sans', sans-serif;line-height:12.5px;color:#333;transform:scaleX(0.9507);transform-origin:left;">ASCII</div>
<div style="left:83px;top:884px;width:1402px;height:9px;background:#eeeeee;"></div>
<svg style="left:96px;top:887px" width="1386" height="4"><defs><pattern id="bdiv" width="4" height="4" patternUnits="userSpaceOnUse"><rect x="0" y="0" width="1" height="1" fill="#ffffff"/><rect x="2" y="2" width="1" height="1" fill="#ffffff"/><rect x="1" y="1" width="1" height="1" fill="#8a98a6"/><rect x="3" y="3" width="1" height="1" fill="#8a98a6"/></pattern></defs><rect width="1386" height="4" fill="url(#bdiv)"/></svg>
<svg style="left:85px;top:884px;" width="24" height="8" viewBox="0 0 24 8"><path d="M1.5 5.5 L5 2 L8.5 5.5 Z" fill="#6382bf" stroke="#333" stroke-width=".5"/><path d="M13 2 L21 2 L17 6 Z" fill="#6382bf" stroke="#333" stroke-width=".5"/></svg>
<div style="left:83px;top:893px;width:1403px;height:1px;background:#7a8a99;"></div>
<div style="left:83px;top:894px;width:1402px;height:196px;background:#eeeeee;"></div>
<svg style="left:85px;top:896px;" width="113" height="21" viewBox="0 0 113 21"><path d="M0.5 21 V6.5 L6.5 0.5 H112.5 V21" fill="#eeeeee" stroke="#96a5b4" stroke-width="1"/></svg>
<div class="t" style="left:95.8px;top:900.62px;font:bold 12.5px 'Liberation Sans', sans-serif;line-height:12.5px;color:#333;transform:scaleX(0.9662);transform-origin:left;">Mars Messages</div>
<div style="left:83px;top:916px;width:1402px;height:1px;background:#6382bf;"></div>
<div style="left:83px;top:916px;width:1px;height:172px;background:#6382bf;"></div>
<div style="left:84px;top:917px;width:1400px;height:3px;background:#c8ddf2;"></div>
<div style="left:84px;top:917px;width:1px;height:170px;background:#c8ddf2;"></div>
<div style="left:1482px;top:917px;width:2px;height:170px;background:#c8ddf2;"></div>
<div style="left:84px;top:1084px;width:1400px;height:3px;background:#c8ddf2;"></div>
<div style="left:1484px;top:916px;width:1px;height:172px;background:#7a8a99;"></div>
<div style="left:83px;top:1087px;width:1402px;height:1px;background:#7a8a99;"></div>
<svg style="left:197px;top:896px;" width="68" height="22" viewBox="0 0 68 22"><path d="M0.5 22 V6.5 L6.5 0.5 H67.5 V22" fill="#c8ddf2" stroke="#6382bf" stroke-width="1"/></svg>
<div class="t" style="left:207.7px;top:900.62px;font:bold 12.5px 'Liberation Sans', sans-serif;line-height:12.5px;color:#333;transform:scaleX(1.0258);transform-origin:left;">Run I/O</div>
<div style="left:198px;top:916px;width:66px;height:1px;background:#c8ddf2;"></div>
<div style="left:85px;top:920px;width:1397px;height:164px;background:#eeeeee;"></div>
<div style="left:162px;top:920px;width:1320px;height:164px;background:#ffffff;"></div>
<div style="left:162px;top:920px;width:1px;height:164px;background:#7a8a99;"></div>
<div style="left:162px;top:920px;width:1319px;height:1px;background:#7a8a99;"></div>
<div style="left:162px;top:1083px;width:1319px;height:1px;background:#7a8a99;"></div>
<div style="left:1480px;top:920px;width:1px;height:164px;background:#7a8a99;"></div>
<div class="t" style="left:163.5px;top:942.42px;font:normal 12.5px 'Liberation Mono', monospace;line-height:12.5px;color:#3a3a3a;letter-spacing:-0.5px;-webkit-text-stroke:0.2px #3a3a3a;">-- program is finished running (dropped off bottom) --</div>
<div style="left:91px;top:987px;width:65px;height:27px;box-sizing:border-box;border:1px solid #7a8a99;background:linear-gradient(#dde8f3 0%,#ffffff 30%,#e8eff8 45%,#b8cfe5 100%);"></div>
<div class="t" style="left:108.6px;top:995.32px;font:bold 12.5px 'Liberation Sans', sans-serif;line-height:12.5px;color:#333;transform:scaleX(0.9782);transform-origin:left;">Clear</div>
<div style="left:83px;top:1088px;width:1404px;height:2px;background:#fafafa;"></div>
<div style="left:1485px;top:179px;width:10px;height:911px;background:#eeeeee;"></div>
<div style="left:1485px;top:181px;width:2px;height:909px;background:#ffffff;"></div>
<svg style="left:1489px;top:191px" width="5" height="899"><defs><pattern id="bvd" width="4" height="4" patternUnits="userSpaceOnUse"><rect x="0" y="0" width="1" height="1" fill="#fff"/><rect x="2" y="2" width="1" height="1" fill="#fff"/><rect x="1" y="1" width="1" height="1" fill="#8a98a6"/><rect x="3" y="3" width="1" height="1" fill="#8a98a6"/></pattern></defs><rect width="5" height="899" fill="url(#bvd)"/></svg>
<svg style="left:1487px;top:182px;" width="8" height="22" viewBox="0 0 8 22"><path d="M6 1 L1.5 5 L6 9 Z" fill="#6382bf"/><path d="M2 13 L6.5 17 L2 21 Z" fill="#6382bf"/></svg>
<div style="left:1495px;top:179px;width:505px;height:1px;background:#a3b0bc;"></div>
<div style="left:1495px;top:180px;width:505px;height:1px;background:#8596a6;"></div>
<div style="left:1495px;top:179px;width:1px;height:911px;background:#8393a2;"></div>
<div style="left:1496px;top:181px;width:505px;height:22px;background:#eeeeee;"></div>
<svg style="left:1575px;top:182px;" width="73" height="21" viewBox="0 0 73 21"><path d="M0.5 21 V6.5 L6.5 0.5 H72.5 V21" fill="#eeeeee" stroke="#96a5b4" stroke-width="1"/></svg>
<div class="t" style="left:1586.5px;top:186.72px;font:bold 12.5px 'Liberation Sans', sans-serif;line-height:12.5px;color:#333;transform:scaleX(0.9080);transform-origin:left;">Coproc 1</div>
<svg style="left:1647px;top:182px;" width="72" height="21" viewBox="0 0 72 21"><path d="M0.5 21 V6.5 L6.5 0.5 H71.5 V21" fill="#eeeeee" stroke="#96a5b4" stroke-width="1"/></svg>
<div class="t" style="left:1658.4px;top:186.72px;font:bold 12.5px 'Liberation Sans', sans-serif;line-height:12.5px;color:#333;transform:scaleX(0.9283);transform-origin:left;">Coproc 0</div>
<div style="left:1496px;top:202px;width:504px;height:1px;background:#6382bf;"></div>
<div style="left:1496px;top:202px;width:1px;height:886px;background:#6382bf;"></div>
<div style="left:1497px;top:203px;width:502px;height:3px;background:#c8ddf2;"></div>
<div style="left:1497px;top:203px;width:1px;height:884px;background:#c8ddf2;"></div>
<div style="left:1996px;top:203px;width:3px;height:884px;background:#c8ddf2;"></div>
<div style="left:1497px;top:1085px;width:502px;height:3px;background:#c8ddf2;"></div>
<div style="left:1999px;top:202px;width:1px;height:886px;background:#7a8a99;"></div>
<div style="left:1496px;top:1088px;width:504px;height:1px;background:#7a8a99;"></div>
<svg style="left:1498px;top:182px;" width="78" height="22" viewBox="0 0 78 22"><path d="M0.5 22 V6.5 L6.5 0.5 H77.5 V22" fill="#c8ddf2" stroke="#6382bf" stroke-width="1"/></svg>
<div class="t" style="left:1508.7px;top:186.72px;font:bold 12.5px 'Liberation Sans', sans-serif;line-height:12.5px;color:#333;transform:scaleX(0.9617);transform-origin:left;">Registers</div>
<div style="left:1499px;top:202px;width:76px;height:1px;background:#c8ddf2;"></div>
<div style="left:1498px;top:206px;width:498px;height:879px;background:#eeeeee;"></div>
<div style="left:1498px;top:206px;width:497px;height:1px;background:#7a8a99;"></div>
<div style="left:1498px;top:206px;width:1px;height:878px;background:#7a8a99;"></div>
<div style="left:1995px;top:206px;width:1px;height:878px;background:#7a8a99;"></div>
<div style="left:1498px;top:1083px;width:498px;height:1px;background:#7a8a99;"></div>
<div style="left:1499px;top:207px;width:154px;height:22px;background:#eeeeee;"></div>
<div style="left:1499px;top:207px;width:153px;height:1px;background:#ffffff;"></div>
<div style="left:1499px;top:207px;width:1px;height:21px;background:#ffffff;"></div>
<div style="left:1652px;top:207px;width:1px;height:22px;background:#7a8a99;"></div>
<div style="left:1499px;top:228px;width:154px;height:1px;background:#7a8a99;"></div>
<div class="t" style="left:1577.0px;top:211.37px;font:normal 13.5px 'Liberation Sans', sans-serif;line-height:13.5px;color:#444444;transform:translateX(-50%) scaleX(0.9079);transform-origin:center;">Name</div>
<div style="left:1653px;top:207px;width:154px;height:22px;background:#eeeeee;"></div>
<div style="left:1653px;top:207px;width:153px;height:1px;background:#ffffff;"></div>
<div style="left:1653px;top:207px;width:1px;height:21px;background:#ffffff;"></div>
<div style="left:1806px;top:207px;width:1px;height:22px;background:#7a8a99;"></div>
<div style="left:1653px;top:228px;width:154px;height:1px;background:#7a8a99;"></div>
<div class="t" style="left:1731.0px;top:211.37px;font:normal 13.5px 'Liberation Sans', sans-serif;line-height:13.5px;color:#444444;transform:translateX(-50%) scaleX(0.9289);transform-origin:center;">Number</div>
<div style="left:1807px;top:207px;width:188px;height:22px;background:#eeeeee;"></div>
<div style="left:1807px;top:207px;width:187px;height:1px;background:#ffffff;"></div>
<div style="left:1807px;top:207px;width:1px;height:21px;background:#ffffff;"></div>
<div style="left:1994px;top:207px;width:1px;height:22px;background:#7a8a99;"></div>
<div style="left:1807px;top:228px;width:188px;height:1px;background:#7a8a99;"></div>
<div class="t" style="left:1902.0px;top:211.37px;font:normal 13.5px 'Liberation Sans', sans-serif;line-height:13.5px;color:#444444;transform:translateX(-50%) scaleX(0.9543);transform-origin:center;">Value</div>
<div style="left:1499px;top:229px;width:496px;height:15px;background:#dddddd;"></div>
<div style="left:1499px;top:244px;width:496px;height:1px;background:#7a8a99;"></div>
<div style="left:1652px;top:229px;width:1px;height:16px;background:#7a8a99;"></div>
<div style="left:1806px;top:229px;width:1px;height:16px;background:#7a8a99;"></div>
<div style="left:1994px;top:229px;width:1px;height:16px;background:#7a8a99;"></div>
<div class="t" style="left:1500.2px;top:231.52px;font:normal 12.5px 'Liberation Mono', monospace;line-height:12.5px;color:#1a1a1a;letter-spacing:-0.5px;-webkit-text-stroke:0.2px #1a1a1a;">$zero</div>
<div class="t" style="right:277.5px;top:231.52px;font:normal 12.5px 'Liberation Mono', monospace;line-height:12.5px;color:#1a1a1a;letter-spacing:-0.5px;-webkit-text-stroke:0.2px #1a1a1a;">0</div>
<div class="t" style="right:89.5px;top:231.52px;font:normal 12.5px 'Liberation Mono', monospace;line-height:12.5px;color:#1a1a1a;letter-spacing:-0.5px;-webkit-text-stroke:0.2px #1a1a1a;">0x00000000</div>
<div style="left:1499px;top:245px;width:496px;height:15px;background:#ffffff;"></div>
<div style="left:1499px;top:260px;width:496px;height:1px;background:#7a8a99;"></div>
<div style="left:1652px;top:245px;width:1px;height:16px;background:#7a8a99;"></div>
<div style="left:1806px;top:245px;width:1px;height:16px;background:#7a8a99;"></div>
<div style="left:1994px;top:245px;width:1px;height:16px;background:#7a8a99;"></div>
<div class="t" style="left:1500.2px;top:247.52px;font:normal 12.5px 'Liberation Mono', monospace;line-height:12.5px;color:#1a1a1a;letter-spacing:-0.5px;-webkit-text-stroke:0.2px #1a1a1a;">$at</div>
<div class="t" style="right:277.5px;top:247.52px;font:normal 12.5px 'Liberation Mono', monospace;line-height:12.5px;color:#1a1a1a;letter-spacing:-0.5px;-webkit-text-stroke:0.2px #1a1a1a;">1</div>
<div class="t" style="right:89.5px;top:247.52px;font:normal 12.5px 'Liberation Mono', monospace;line-height:12.5px;color:#1a1a1a;letter-spacing:-0.5px;-webkit-text-stroke:0.2px #1a1a1a;">0x10010000</div>
<div style="left:1499px;top:261px;width:496px;height:15px;background:#dddddd;"></div>
<div style="left:1499px;top:276px;width:496px;height:1px;background:#7a8a99;"></div>
<div style="left:1652px;top:261px;width:1px;height:16px;background:#7a8a99;"></div>
<div style="left:1806px;top:261px;width:1px;height:16px;background:#7a8a99;"></div>
<div style="left:1994px;top:261px;width:1px;height:16px;background:#7a8a99;"></div>
<div class="t" style="left:1500.2px;top:263.52px;font:normal 12.5px 'Liberation Mono', monospace;line-height:12.5px;color:#1a1a1a;letter-spacing:-0.5px;-webkit-text-stroke:0.2px #1a1a1a;">$v0</div>
<div class="t" style="right:277.5px;top:263.52px;font:normal 12.5px 'Liberation Mono', monospace;line-height:12.5px;color:#1a1a1a;letter-spacing:-0.5px;-webkit-text-stroke:0.2px #1a1a1a;">2</div>
<div class="t" style="right:89.5px;top:263.52px;font:normal 12.5px 'Liberation Mono', monospace;line-height:12.5px;color:#1a1a1a;letter-spacing:-0.5px;-webkit-text-stroke:0.2px #1a1a1a;">0x00000000</div>
<div style="left:1499px;top:277px;width:496px;height:15px;background:#ffffff;"></div>
<div style="left:1499px;top:292px;width:496px;height:1px;background:#7a8a99;"></div>
<div style="left:1652px;top:277px;width:1px;height:16px;background:#7a8a99;"></div>
<div style="left:1806px;top:277px;width:1px;height:16px;background:#7a8a99;"></div>
<div style="left:1994px;top:277px;width:1px;height:16px;background:#7a8a99;"></div>
<div class="t" style="left:1500.2px;top:279.52px;font:normal 12.5px 'Liberation Mono', monospace;line-height:12.5px;color:#1a1a1a;letter-spacing:-0.5px;-webkit-text-stroke:0.2px #1a1a1a;">$v1</div>
<div class="t" style="right:277.5px;top:279.52px;font:normal 12.5px 'Liberation Mono', monospace;line-height:12.5px;color:#1a1a1a;letter-spacing:-0.5px;-webkit-text-stroke:0.2px #1a1a1a;">3</div>
<div class="t" style="right:89.5px;top:279.52px;font:normal 12.5px 'Liberation Mono', monospace;line-height:12.5px;color:#1a1a1a;letter-spacing:-0.5px;-webkit-text-stroke:0.2px #1a1a1a;">0x00000000</div>
<div style="left:1499px;top:293px;width:496px;height:15px;background:#dddddd;"></div>
<div style="left:1499px;top:308px;width:496px;height:1px;background:#7a8a99;"></div>
<div style="left:1652px;top:293px;width:1px;height:16px;background:#7a8a99;"></div>
<div style="left:1806px;top:293px;width:1px;height:16px;background:#7a8a99;"></div>
<div style="left:1994px;top:293px;width:1px;height:16px;background:#7a8a99;"></div>
<div class="t" style="left:1500.2px;top:295.52px;font:normal 12.5px 'Liberation Mono', monospace;line-height:12.5px;color:#1a1a1a;letter-spacing:-0.5px;-webkit-text-stroke:0.2px #1a1a1a;">$a0</div>
<div class="t" style="right:277.5px;top:295.52px;font:normal 12.5px 'Liberation Mono', monospace;line-height:12.5px;color:#1a1a1a;letter-spacing:-0.5px;-webkit-text-stroke:0.2px #1a1a1a;">4</div>
<div class="t" style="right:89.5px;top:295.52px;font:normal 12.5px 'Liberation Mono', monospace;line-height:12.5px;color:#1a1a1a;letter-spacing:-0.5px;-webkit-text-stroke:0.2px #1a1a1a;">0x00000000</div>
<div style="left:1499px;top:309px;width:496px;height:15px;background:#ffffff;"></div>
<div style="left:1499px;top:324px;width:496px;height:1px;background:#7a8a99;"></div>
<div style="left:1652px;top:309px;width:1px;height:16px;background:#7a8a99;"></div>
<div style="left:1806px;top:309px;width:1px;height:16px;background:#7a8a99;"></div>
<div style="left:1994px;top:309px;width:1px;height:16px;background:#7a8a99;"></div>
<div class="t" style="left:1500.2px;top:311.52px;font:normal 12.5px 'Liberation Mono', monospace;line-height:12.5px;color:#1a1a1a;letter-spacing:-0.5px;-webkit-text-stroke:0.2px #1a1a1a;">$a1</div>
<div class="t" style="right:277.5px;top:311.52px;font:normal 12.5px 'Liberation Mono', monospace;line-height:12.5px;color:#1a1a1a;letter-spacing:-0.5px;-webkit-text-stroke:0.2px #1a1a1a;">5</div>
<div class="t" style="right:89.5px;top:311.52px;font:normal 12.5px 'Liberation Mono', monospace;line-height:12.5px;color:#1a1a1a;letter-spacing:-0.5px;-webkit-text-stroke:0.2px #1a1a1a;">0x00000000</div>
<div style="left:1499px;top:325px;width:496px;height:15px;background:#dddddd;"></div>
<div style="left:1499px;top:340px;width:496px;height:1px;background:#7a8a99;"></div>
<div style="left:1652px;top:325px;width:1px;height:16px;background:#7a8a99;"></div>
<div style="left:1806px;top:325px;width:1px;height:16px;background:#7a8a99;"></div>
<div style="left:1994px;top:325px;width:1px;height:16px;background:#7a8a99;"></div>
<div class="t" style="left:1500.2px;top:327.52px;font:normal 12.5px 'Liberation Mono', monospace;line-height:12.5px;color:#1a1a1a;letter-spacing:-0.5px;-webkit-text-stroke:0.2px #1a1a1a;">$a2</div>
<div class="t" style="right:277.5px;top:327.52px;font:normal 12.5px 'Liberation Mono', monospace;line-height:12.5px;color:#1a1a1a;letter-spacing:-0.5px;-webkit-text-stroke:0.2px #1a1a1a;">6</div>
<div class="t" style="right:89.5px;top:327.52px;font:normal 12.5px 'Liberation Mono', monospace;line-height:12.5px;color:#1a1a1a;letter-spacing:-0.5px;-webkit-text-stroke:0.2px #1a1a1a;">0x00000000</div>
<div style="left:1499px;top:341px;width:496px;height:15px;background:#ffffff;"></div>
<div style="left:1499px;top:356px;width:496px;height:1px;background:#7a8a99;"></div>
<div style="left:1652px;top:341px;width:1px;height:16px;background:#7a8a99;"></div>
<div style="left:1806px;top:341px;width:1px;height:16px;background:#7a8a99;"></div>
<div style="left:1994px;top:341px;width:1px;height:16px;background:#7a8a99;"></div>
<div class="t" style="left:1500.2px;top:343.52px;font:normal 12.5px 'Liberation Mono', monospace;line-height:12.5px;color:#1a1a1a;letter-spacing:-0.5px;-webkit-text-stroke:0.2px #1a1a1a;">$a3</div>
<div class="t" style="right:277.5px;top:343.52px;font:normal 12.5px 'Liberation Mono', monospace;line-height:12.5px;color:#1a1a1a;letter-spacing:-0.5px;-webkit-text-stroke:0.2px #1a1a1a;">7</div>
<div class="t" style="right:89.5px;top:343.52px;font:normal 12.5px 'Liberation Mono', monospace;line-height:12.5px;color:#1a1a1a;letter-spacing:-0.5px;-webkit-text-stroke:0.2px #1a1a1a;">0x00000000</div>
<div style="left:1499px;top:357px;width:496px;height:15px;background:#dddddd;"></div>
<div style="left:1499px;top:372px;width:496px;height:1px;background:#7a8a99;"></div>
<div style="left:1652px;top:357px;width:1px;height:16px;background:#7a8a99;"></div>
<div style="left:1806px;top:357px;width:1px;height:16px;background:#7a8a99;"></div>
<div style="left:1994px;top:357px;width:1px;height:16px;background:#7a8a99;"></div>
<div class="t" style="left:1500.2px;top:359.52px;font:normal 12.5px 'Liberation Mono', monospace;line-height:12.5px;color:#1a1a1a;letter-spacing:-0.5px;-webkit-text-stroke:0.2px #1a1a1a;">$t0</div>
<div class="t" style="right:277.5px;top:359.52px;font:normal 12.5px 'Liberation Mono', monospace;line-height:12.5px;color:#1a1a1a;letter-spacing:-0.5px;-webkit-text-stroke:0.2px #1a1a1a;">8</div>
<div class="t" style="right:89.5px;top:359.52px;font:normal 12.5px 'Liberation Mono', monospace;line-height:12.5px;color:#1a1a1a;letter-spacing:-0.5px;-webkit-text-stroke:0.2px #1a1a1a;">0x00000073</div>
<div style="left:1499px;top:373px;width:496px;height:15px;background:#ffffff;"></div>
<div style="left:1499px;top:388px;width:496px;height:1px;background:#7a8a99;"></div>
<div style="left:1652px;top:373px;width:1px;height:16px;background:#7a8a99;"></div>
<div style="left:1806px;top:373px;width:1px;height:16px;background:#7a8a99;"></div>
<div style="left:1994px;top:373px;width:1px;height:16px;background:#7a8a99;"></div>
<div class="t" style="left:1500.2px;top:375.52px;font:normal 12.5px 'Liberation Mono', monospace;line-height:12.5px;color:#1a1a1a;letter-spacing:-0.5px;-webkit-text-stroke:0.2px #1a1a1a;">$t1</div>
<div class="t" style="right:277.5px;top:375.52px;font:normal 12.5px 'Liberation Mono', monospace;line-height:12.5px;color:#1a1a1a;letter-spacing:-0.5px;-webkit-text-stroke:0.2px #1a1a1a;">9</div>
<div class="t" style="right:89.5px;top:375.52px;font:normal 12.5px 'Liberation Mono', monospace;line-height:12.5px;color:#1a1a1a;letter-spacing:-0.5px;-webkit-text-stroke:0.2px #1a1a1a;">0x00000000</div>
<div style="left:1499px;top:389px;width:496px;height:15px;background:#dddddd;"></div>
<div style="left:1499px;top:404px;width:496px;height:1px;background:#7a8a99;"></div>
<div style="left:1652px;top:389px;width:1px;height:16px;background:#7a8a99;"></div>
<div style="left:1806px;top:389px;width:1px;height:16px;background:#7a8a99;"></div>
<div style="left:1994px;top:389px;width:1px;height:16px;background:#7a8a99;"></div>
<div class="t" style="left:1500.2px;top:391.52px;font:normal 12.5px 'Liberation Mono', monospace;line-height:12.5px;color:#1a1a1a;letter-spacing:-0.5px;-webkit-text-stroke:0.2px #1a1a1a;">$t2</div>
<div class="t" style="right:277.5px;top:391.52px;font:normal 12.5px 'Liberation Mono', monospace;line-height:12.5px;color:#1a1a1a;letter-spacing:-0.5px;-webkit-text-stroke:0.2px #1a1a1a;">10</div>
<div class="t" style="right:89.5px;top:391.52px;font:normal 12.5px 'Liberation Mono', monospace;line-height:12.5px;color:#1a1a1a;letter-spacing:-0.5px;-webkit-text-stroke:0.2px #1a1a1a;">0x00000000</div>
<div style="left:1499px;top:405px;width:496px;height:15px;background:#ffffff;"></div>
<div style="left:1499px;top:420px;width:496px;height:1px;background:#7a8a99;"></div>
<div style="left:1652px;top:405px;width:1px;height:16px;background:#7a8a99;"></div>
<div style="left:1806px;top:405px;width:1px;height:16px;background:#7a8a99;"></div>
<div style="left:1994px;top:405px;width:1px;height:16px;background:#7a8a99;"></div>
<div class="t" style="left:1500.2px;top:407.52px;font:normal 12.5px 'Liberation Mono', monospace;line-height:12.5px;color:#1a1a1a;letter-spacing:-0.5px;-webkit-text-stroke:0.2px #1a1a1a;">$t3</div>
<div class="t" style="right:277.5px;top:407.52px;font:normal 12.5px 'Liberation Mono', monospace;line-height:12.5px;color:#1a1a1a;letter-spacing:-0.5px;-webkit-text-stroke:0.2px #1a1a1a;">11</div>
<div class="t" style="right:89.5px;top:407.52px;font:normal 12.5px 'Liberation Mono', monospace;line-height:12.5px;color:#1a1a1a;letter-spacing:-0.5px;-webkit-text-stroke:0.2px #1a1a1a;">0x00000000</div>
<div style="left:1499px;top:421px;width:496px;height:15px;background:#dddddd;"></div>
<div style="left:1499px;top:436px;width:496px;height:1px;background:#7a8a99;"></div>
<div style="left:1652px;top:421px;width:1px;height:16px;background:#7a8a99;"></div>
<div style="left:1806px;top:421px;width:1px;height:16px;background:#7a8a99;"></div>
<div style="left:1994px;top:421px;width:1px;height:16px;background:#7a8a99;"></div>
<div class="t" style="left:1500.2px;top:423.52px;font:normal 12.5px 'Liberation Mono', monospace;line-height:12.5px;color:#1a1a1a;letter-spacing:-0.5px;-webkit-text-stroke:0.2px #1a1a1a;">$t4</div>
<div class="t" style="right:277.5px;top:423.52px;font:normal 12.5px 'Liberation Mono', monospace;line-height:12.5px;color:#1a1a1a;letter-spacing:-0.5px;-webkit-text-stroke:0.2px #1a1a1a;">12</div>
<div class="t" style="right:89.5px;top:423.52px;font:normal 12.5px 'Liberation Mono', monospace;line-height:12.5px;color:#1a1a1a;letter-spacing:-0.5px;-webkit-text-stroke:0.2px #1a1a1a;">0x00000000</div>
<div style="left:1499px;top:437px;width:496px;height:15px;background:#ffffff;"></div>
<div style="left:1499px;top:452px;width:496px;height:1px;background:#7a8a99;"></div>
<div style="left:1652px;top:437px;width:1px;height:16px;background:#7a8a99;"></div>
<div style="left:1806px;top:437px;width:1px;height:16px;background:#7a8a99;"></div>
<div style="left:1994px;top:437px;width:1px;height:16px;background:#7a8a99;"></div>
<div class="t" style="left:1500.2px;top:439.52px;font:normal 12.5px 'Liberation Mono', monospace;line-height:12.5px;color:#1a1a1a;letter-spacing:-0.5px;-webkit-text-stroke:0.2px #1a1a1a;">$t5</div>
<div class="t" style="right:277.5px;top:439.52px;font:normal 12.5px 'Liberation Mono', monospace;line-height:12.5px;color:#1a1a1a;letter-spacing:-0.5px;-webkit-text-stroke:0.2px #1a1a1a;">13</div>
<div class="t" style="right:89.5px;top:439.52px;font:normal 12.5px 'Liberation Mono', monospace;line-height:12.5px;color:#1a1a1a;letter-spacing:-0.5px;-webkit-text-stroke:0.2px #1a1a1a;">0x00000000</div>
<div style="left:1499px;top:453px;width:496px;height:15px;background:#dddddd;"></div>
<div style="left:1499px;top:468px;width:496px;height:1px;background:#7a8a99;"></div>
<div style="left:1652px;top:453px;width:1px;height:16px;background:#7a8a99;"></div>
<div style="left:1806px;top:453px;width:1px;height:16px;background:#7a8a99;"></div>
<div style="left:1994px;top:453px;width:1px;height:16px;background:#7a8a99;"></div>
<div class="t" style="left:1500.2px;top:455.52px;font:normal 12.5px 'Liberation Mono', monospace;line-height:12.5px;color:#1a1a1a;letter-spacing:-0.5px;-webkit-text-stroke:0.2px #1a1a1a;">$t6</div>
<div class="t" style="right:277.5px;top:455.52px;font:normal 12.5px 'Liberation Mono', monospace;line-height:12.5px;color:#1a1a1a;letter-spacing:-0.5px;-webkit-text-stroke:0.2px #1a1a1a;">14</div>
<div class="t" style="right:89.5px;top:455.52px;font:normal 12.5px 'Liberation Mono', monospace;line-height:12.5px;color:#1a1a1a;letter-spacing:-0.5px;-webkit-text-stroke:0.2px #1a1a1a;">0x00000000</div>
<div style="left:1499px;top:469px;width:496px;height:15px;background:#ffffff;"></div>
<div style="left:1499px;top:484px;width:496px;height:1px;background:#7a8a99;"></div>
<div style="left:1652px;top:469px;width:1px;height:16px;background:#7a8a99;"></div>
<div style="left:1806px;top:469px;width:1px;height:16px;background:#7a8a99;"></div>
<div style="left:1994px;top:469px;width:1px;height:16px;background:#7a8a99;"></div>
<div class="t" style="left:1500.2px;top:471.52px;font:normal 12.5px 'Liberation Mono', monospace;line-height:12.5px;color:#1a1a1a;letter-spacing:-0.5px;-webkit-text-stroke:0.2px #1a1a1a;">$t7</div>
<div class="t" style="right:277.5px;top:471.52px;font:normal 12.5px 'Liberation Mono', monospace;line-height:12.5px;color:#1a1a1a;letter-spacing:-0.5px;-webkit-text-stroke:0.2px #1a1a1a;">15</div>
<div class="t" style="right:89.5px;top:471.52px;font:normal 12.5px 'Liberation Mono', monospace;line-height:12.5px;color:#1a1a1a;letter-spacing:-0.5px;-webkit-text-stroke:0.2px #1a1a1a;">0x00000000</div>
<div style="left:1499px;top:485px;width:496px;height:15px;background:#dddddd;"></div>
<div style="left:1499px;top:500px;width:496px;height:1px;background:#7a8a99;"></div>
<div style="left:1652px;top:485px;width:1px;height:16px;background:#7a8a99;"></div>
<div style="left:1806px;top:485px;width:1px;height:16px;background:#7a8a99;"></div>
<div style="left:1994px;top:485px;width:1px;height:16px;background:#7a8a99;"></div>
<div class="t" style="left:1500.2px;top:487.52px;font:normal 12.5px 'Liberation Mono', monospace;line-height:12.5px;color:#1a1a1a;letter-spacing:-0.5px;-webkit-text-stroke:0.2px #1a1a1a;">$s0</div>
<div class="t" style="right:277.5px;top:487.52px;font:normal 12.5px 'Liberation Mono', monospace;line-height:12.5px;color:#1a1a1a;letter-spacing:-0.5px;-webkit-text-stroke:0.2px #1a1a1a;">16</div>
<div class="t" style="right:89.5px;top:487.52px;font:normal 12.5px 'Liberation Mono', monospace;line-height:12.5px;color:#1a1a1a;letter-spacing:-0.5px;-webkit-text-stroke:0.2px #1a1a1a;">0x00000000</div>
<div style="left:1499px;top:501px;width:496px;height:15px;background:#ffffff;"></div>
<div style="left:1499px;top:516px;width:496px;height:1px;background:#7a8a99;"></div>
<div style="left:1652px;top:501px;width:1px;height:16px;background:#7a8a99;"></div>
<div style="left:1806px;top:501px;width:1px;height:16px;background:#7a8a99;"></div>
<div style="left:1994px;top:501px;width:1px;height:16px;background:#7a8a99;"></div>
<div class="t" style="left:1500.2px;top:503.52px;font:normal 12.5px 'Liberation Mono', monospace;line-height:12.5px;color:#1a1a1a;letter-spacing:-0.5px;-webkit-text-stroke:0.2px #1a1a1a;">$s1</div>
<div class="t" style="right:277.5px;top:503.52px;font:normal 12.5px 'Liberation Mono', monospace;line-height:12.5px;color:#1a1a1a;letter-spacing:-0.5px;-webkit-text-stroke:0.2px #1a1a1a;">17</div>
<div class="t" style="right:89.5px;top:503.52px;font:normal 12.5px 'Liberation Mono', monospace;line-height:12.5px;color:#1a1a1a;letter-spacing:-0.5px;-webkit-text-stroke:0.2px #1a1a1a;">0x00000000</div>
<div style="left:1499px;top:517px;width:496px;height:15px;background:#dddddd;"></div>
<div style="left:1499px;top:532px;width:496px;height:1px;background:#7a8a99;"></div>
<div style="left:1652px;top:517px;width:1px;height:16px;background:#7a8a99;"></div>
<div style="left:1806px;top:517px;width:1px;height:16px;background:#7a8a99;"></div>
<div style="left:1994px;top:517px;width:1px;height:16px;background:#7a8a99;"></div>
<div class="t" style="left:1500.2px;top:519.52px;font:normal 12.5px 'Liberation Mono', monospace;line-height:12.5px;color:#1a1a1a;letter-spacing:-0.5px;-webkit-text-stroke:0.2px #1a1a1a;">$s2</div>
<div class="t" style="right:277.5px;top:519.52px;font:normal 12.5px 'Liberation Mono', monospace;line-height:12.5px;color:#1a1a1a;letter-spacing:-0.5px;-webkit-text-stroke:0.2px #1a1a1a;">18</div>
<div class="t" style="right:89.5px;top:519.52px;font:normal 12.5px 'Liberation Mono', monospace;line-height:12.5px;color:#1a1a1a;letter-spacing:-0.5px;-webkit-text-stroke:0.2px #1a1a1a;">0x00000000</div>
<div style="left:1499px;top:533px;width:496px;height:15px;background:#ffffff;"></div>
<div style="left:1499px;top:548px;width:496px;height:1px;background:#7a8a99;"></div>
<div style="left:1652px;top:533px;width:1px;height:16px;background:#7a8a99;"></div>
<div style="left:1806px;top:533px;width:1px;height:16px;background:#7a8a99;"></div>
<div style="left:1994px;top:533px;width:1px;height:16px;background:#7a8a99;"></div>
<div class="t" style="left:1500.2px;top:535.52px;font:normal 12.5px 'Liberation Mono', monospace;line-height:12.5px;color:#1a1a1a;letter-spacing:-0.5px;-webkit-text-stroke:0.2px #1a1a1a;">$s3</div>
<div class="t" style="right:277.5px;top:535.52px;font:normal 12.5px 'Liberation Mono', monospace;line-height:12.5px;color:#1a1a1a;letter-spacing:-0.5px;-webkit-text-stroke:0.2px #1a1a1a;">19</div>
<div class="t" style="right:89.5px;top:535.52px;font:normal 12.5px 'Liberation Mono', monospace;line-height:12.5px;color:#1a1a1a;letter-spacing:-0.5px;-webkit-text-stroke:0.2px #1a1a1a;">0x00000000</div>
<div style="left:1499px;top:549px;width:496px;height:15px;background:#dddddd;"></div>
<div style="left:1499px;top:564px;width:496px;height:1px;background:#7a8a99;"></div>
<div style="left:1652px;top:549px;width:1px;height:16px;background:#7a8a99;"></div>
<div style="left:1806px;top:549px;width:1px;height:16px;background:#7a8a99;"></div>
<div style="left:1994px;top:549px;width:1px;height:16px;background:#7a8a99;"></div>
<div class="t" style="left:1500.2px;top:551.52px;font:normal 12.5px 'Liberation Mono', monospace;line-height:12.5px;color:#1a1a1a;letter-spacing:-0.5px;-webkit-text-stroke:0.2px #1a1a1a;">$s4</div>
<div class="t" style="right:277.5px;top:551.52px;font:normal 12.5px 'Liberation Mono', monospace;line-height:12.5px;color:#1a1a1a;letter-spacing:-0.5px;-webkit-text-stroke:0.2px #1a1a1a;">20</div>
<div class="t" style="right:89.5px;top:551.52px;font:normal 12.5px 'Liberation Mono', monospace;line-height:12.5px;color:#1a1a1a;letter-spacing:-0.5px;-webkit-text-stroke:0.2px #1a1a1a;">0x00000000</div>
<div style="left:1499px;top:565px;width:496px;height:15px;background:#ffffff;"></div>
<div style="left:1499px;top:580px;width:496px;height:1px;background:#7a8a99;"></div>
<div style="left:1652px;top:565px;width:1px;height:16px;background:#7a8a99;"></div>
<div style="left:1806px;top:565px;width:1px;height:16px;background:#7a8a99;"></div>
<div style="left:1994px;top:565px;width:1px;height:16px;background:#7a8a99;"></div>
<div class="t" style="left:1500.2px;top:567.52px;font:normal 12.5px 'Liberation Mono', monospace;line-height:12.5px;color:#1a1a1a;letter-spacing:-0.5px;-webkit-text-stroke:0.2px #1a1a1a;">$s5</div>
<div class="t" style="right:277.5px;top:567.52px;font:normal 12.5px 'Liberation Mono', monospace;line-height:12.5px;color:#1a1a1a;letter-spacing:-0.5px;-webkit-text-stroke:0.2px #1a1a1a;">21</div>
<div class="t" style="right:89.5px;top:567.52px;font:normal 12.5px 'Liberation Mono', monospace;line-height:12.5px;color:#1a1a1a;letter-spacing:-0.5px;-webkit-text-stroke:0.2px #1a1a1a;">0x00000000</div>
<div style="left:1499px;top:581px;width:496px;height:15px;background:#dddddd;"></div>
<div style="left:1499px;top:596px;width:496px;height:1px;background:#7a8a99;"></div>
<div style="left:1652px;top:581px;width:1px;height:16px;background:#7a8a99;"></div>
<div style="left:1806px;top:581px;width:1px;height:16px;background:#7a8a99;"></div>
<div style="left:1994px;top:581px;width:1px;height:16px;background:#7a8a99;"></div>
<div class="t" style="left:1500.2px;top:583.52px;font:normal 12.5px 'Liberation Mono', monospace;line-height:12.5px;color:#1a1a1a;letter-spacing:-0.5px;-webkit-text-stroke:0.2px #1a1a1a;">$s6</div>
<div class="t" style="right:277.5px;top:583.52px;font:normal 12.5px 'Liberation Mono', monospace;line-height:12.5px;color:#1a1a1a;letter-spacing:-0.5px;-webkit-text-stroke:0.2px #1a1a1a;">22</div>
<div class="t" style="right:89.5px;top:583.52px;font:normal 12.5px 'Liberation Mono', monospace;line-height:12.5px;color:#1a1a1a;letter-spacing:-0.5px;-webkit-text-stroke:0.2px #1a1a1a;">0x00000000</div>
<div style="left:1499px;top:597px;width:496px;height:15px;background:#ffffff;"></div>
<div style="left:1499px;top:612px;width:496px;height:1px;background:#7a8a99;"></div>
<div style="left:1652px;top:597px;width:1px;height:16px;background:#7a8a99;"></div>
<div style="left:1806px;top:597px;width:1px;height:16px;background:#7a8a99;"></div>
<div style="left:1994px;top:597px;width:1px;height:16px;background:#7a8a99;"></div>
<div class="t" style="left:1500.2px;top:599.52px;font:normal 12.5px 'Liberation Mono', monospace;line-height:12.5px;color:#1a1a1a;letter-spacing:-0.5px;-webkit-text-stroke:0.2px #1a1a1a;">$s7</div>
<div class="t" style="right:277.5px;top:599.52px;font:normal 12.5px 'Liberation Mono', monospace;line-height:12.5px;color:#1a1a1a;letter-spacing:-0.5px;-webkit-text-stroke:0.2px #1a1a1a;">23</div>
<div class="t" style="right:89.5px;top:599.52px;font:normal 12.5px 'Liberation Mono', monospace;line-height:12.5px;color:#1a1a1a;letter-spacing:-0.5px;-webkit-text-stroke:0.2px #1a1a1a;">0x00000000</div>
<div style="left:1499px;top:613px;width:496px;height:15px;background:#dddddd;"></div>
<div style="left:1499px;top:628px;width:496px;height:1px;background:#7a8a99;"></div>
<div style="left:1652px;top:613px;width:1px;height:16px;background:#7a8a99;"></div>
<div style="left:1806px;top:613px;width:1px;height:16px;background:#7a8a99;"></div>
<div style="left:1994px;top:613px;width:1px;height:16px;background:#7a8a99;"></div>
<div class="t" style="left:1500.2px;top:615.52px;font:normal 12.5px 'Liberation Mono', monospace;line-height:12.5px;color:#1a1a1a;letter-spacing:-0.5px;-webkit-text-stroke:0.2px #1a1a1a;">$t8</div>
<div class="t" style="right:277.5px;top:615.52px;font:normal 12.5px 'Liberation Mono', monospace;line-height:12.5px;color:#1a1a1a;letter-spacing:-0.5px;-webkit-text-stroke:0.2px #1a1a1a;">24</div>
<div class="t" style="right:89.5px;top:615.52px;font:normal 12.5px 'Liberation Mono', monospace;line-height:12.5px;color:#1a1a1a;letter-spacing:-0.5px;-webkit-text-stroke:0.2px #1a1a1a;">0x00000000</div>
<div style="left:1499px;top:629px;width:496px;height:15px;background:#ffffff;"></div>
<div style="left:1499px;top:644px;width:496px;height:1px;background:#7a8a99;"></div>
<div style="left:1652px;top:629px;width:1px;height:16px;background:#7a8a99;"></div>
<div style="left:1806px;top:629px;width:1px;height:16px;background:#7a8a99;"></div>
<div style="left:1994px;top:629px;width:1px;height:16px;background:#7a8a99;"></div>
<div class="t" style="left:1500.2px;top:631.52px;font:normal 12.5px 'Liberation Mono', monospace;line-height:12.5px;color:#1a1a1a;letter-spacing:-0.5px;-webkit-text-stroke:0.2px #1a1a1a;">$t9</div>
<div class="t" style="right:277.5px;top:631.52px;font:normal 12.5px 'Liberation Mono', monospace;line-height:12.5px;color:#1a1a1a;letter-spacing:-0.5px;-webkit-text-stroke:0.2px #1a1a1a;">25</div>
<div class="t" style="right:89.5px;top:631.52px;font:normal 12.5px 'Liberation Mono', monospace;line-height:12.5px;color:#1a1a1a;letter-spacing:-0.5px;-webkit-text-stroke:0.2px #1a1a1a;">0x00000000</div>
<div style="left:1499px;top:645px;width:496px;height:15px;background:#dddddd;"></div>
<div style="left:1499px;top:660px;width:496px;height:1px;background:#7a8a99;"></div>
<div style="left:1652px;top:645px;width:1px;height:16px;background:#7a8a99;"></div>
<div style="left:1806px;top:645px;width:1px;height:16px;background:#7a8a99;"></div>
<div style="left:1994px;top:645px;width:1px;height:16px;background:#7a8a99;"></div>
<div class="t" style="left:1500.2px;top:647.52px;font:normal 12.5px 'Liberation Mono', monospace;line-height:12.5px;color:#1a1a1a;letter-spacing:-0.5px;-webkit-text-stroke:0.2px #1a1a1a;">$k0</div>
<div class="t" style="right:277.5px;top:647.52px;font:normal 12.5px 'Liberation Mono', monospace;line-height:12.5px;color:#1a1a1a;letter-spacing:-0.5px;-webkit-text-stroke:0.2px #1a1a1a;">26</div>
<div class="t" style="right:89.5px;top:647.52px;font:normal 12.5px 'Liberation Mono', monospace;line-height:12.5px;color:#1a1a1a;letter-spacing:-0.5px;-webkit-text-stroke:0.2px #1a1a1a;">0x00000000</div>
<div style="left:1499px;top:661px;width:496px;height:15px;background:#ffffff;"></div>
<div style="left:1499px;top:676px;width:496px;height:1px;background:#7a8a99;"></div>
<div style="left:1652px;top:661px;width:1px;height:16px;background:#7a8a99;"></div>
<div style="left:1806px;top:661px;width:1px;height:16px;background:#7a8a99;"></div>
<div style="left:1994px;top:661px;width:1px;height:16px;background:#7a8a99;"></div>
<div class="t" style="left:1500.2px;top:663.52px;font:normal 12.5px 'Liberation Mono', monospace;line-height:12.5px;color:#1a1a1a;letter-spacing:-0.5px;-webkit-text-stroke:0.2px #1a1a1a;">$k1</div>
<div class="t" style="right:277.5px;top:663.52px;font:normal 12.5px 'Liberation Mono', monospace;line-height:12.5px;color:#1a1a1a;letter-spacing:-0.5px;-webkit-text-stroke:0.2px #1a1a1a;">27</div>
<div class="t" style="right:89.5px;top:663.52px;font:normal 12.5px 'Liberation Mono', monospace;line-height:12.5px;color:#1a1a1a;letter-spacing:-0.5px;-webkit-text-stroke:0.2px #1a1a1a;">0x00000000</div>
<div style="left:1499px;top:677px;width:496px;height:15px;background:#dddddd;"></div>
<div style="left:1499px;top:692px;width:496px;height:1px;background:#7a8a99;"></div>
<div style="left:1652px;top:677px;width:1px;height:16px;background:#7a8a99;"></div>
<div style="left:1806px;top:677px;width:1px;height:16px;background:#7a8a99;"></div>
<div style="left:1994px;top:677px;width:1px;height:16px;background:#7a8a99;"></div>
<div class="t" style="left:1500.2px;top:679.52px;font:normal 12.5px 'Liberation Mono', monospace;line-height:12.5px;color:#1a1a1a;letter-spacing:-0.5px;-webkit-text-stroke:0.2px #1a1a1a;">$gp</div>
<div class="t" style="right:277.5px;top:679.52px;font:normal 12.5px 'Liberation Mono', monospace;line-height:12.5px;color:#1a1a1a;letter-spacing:-0.5px;-webkit-text-stroke:0.2px #1a1a1a;">28</div>
<div class="t" style="right:89.5px;top:679.52px;font:normal 12.5px 'Liberation Mono', monospace;line-height:12.5px;color:#1a1a1a;letter-spacing:-0.5px;-webkit-text-stroke:0.2px #1a1a1a;">0x10008000</div>
<div style="left:1499px;top:693px;width:496px;height:15px;background:#ffffff;"></div>
<div style="left:1499px;top:708px;width:496px;height:1px;background:#7a8a99;"></div>
<div style="left:1652px;top:693px;width:1px;height:16px;background:#7a8a99;"></div>
<div style="left:1806px;top:693px;width:1px;height:16px;background:#7a8a99;"></div>
<div style="left:1994px;top:693px;width:1px;height:16px;background:#7a8a99;"></div>
<div class="t" style="left:1500.2px;top:695.52px;font:normal 12.5px 'Liberation Mono', monospace;line-height:12.5px;color:#1a1a1a;letter-spacing:-0.5px;-webkit-text-stroke:0.2px #1a1a1a;">$sp</div>
<div class="t" style="right:277.5px;top:695.52px;font:normal 12.5px 'Liberation Mono', monospace;line-height:12.5px;color:#1a1a1a;letter-spacing:-0.5px;-webkit-text-stroke:0.2px #1a1a1a;">29</div>
<div class="t" style="right:89.5px;top:695.52px;font:normal 12.5px 'Liberation Mono', monospace;line-height:12.5px;color:#1a1a1a;letter-spacing:-0.5px;-webkit-text-stroke:0.2px #1a1a1a;">0x7fffeffc</div>
<div style="left:1499px;top:709px;width:496px;height:15px;background:#dddddd;"></div>
<div style="left:1499px;top:724px;width:496px;height:1px;background:#7a8a99;"></div>
<div style="left:1652px;top:709px;width:1px;height:16px;background:#7a8a99;"></div>
<div style="left:1806px;top:709px;width:1px;height:16px;background:#7a8a99;"></div>
<div style="left:1994px;top:709px;width:1px;height:16px;background:#7a8a99;"></div>
<div class="t" style="left:1500.2px;top:711.52px;font:normal 12.5px 'Liberation Mono', monospace;line-height:12.5px;color:#1a1a1a;letter-spacing:-0.5px;-webkit-text-stroke:0.2px #1a1a1a;">$fp</div>
<div class="t" style="right:277.5px;top:711.52px;font:normal 12.5px 'Liberation Mono', monospace;line-height:12.5px;color:#1a1a1a;letter-spacing:-0.5px;-webkit-text-stroke:0.2px #1a1a1a;">30</div>
<div class="t" style="right:89.5px;top:711.52px;font:normal 12.5px 'Liberation Mono', monospace;line-height:12.5px;color:#1a1a1a;letter-spacing:-0.5px;-webkit-text-stroke:0.2px #1a1a1a;">0x00000000</div>
<div style="left:1499px;top:725px;width:496px;height:15px;background:#ffffff;"></div>
<div style="left:1499px;top:740px;width:496px;height:1px;background:#7a8a99;"></div>
<div style="left:1652px;top:725px;width:1px;height:16px;background:#7a8a99;"></div>
<div style="left:1806px;top:725px;width:1px;height:16px;background:#7a8a99;"></div>
<div style="left:1994px;top:725px;width:1px;height:16px;background:#7a8a99;"></div>
<div class="t" style="left:1500.2px;top:727.52px;font:normal 12.5px 'Liberation Mono', monospace;line-height:12.5px;color:#1a1a1a;letter-spacing:-0.5px;-webkit-text-stroke:0.2px #1a1a1a;">$ra</div>
<div class="t" style="right:277.5px;top:727.52px;font:normal 12.5px 'Liberation Mono', monospace;line-height:12.5px;color:#1a1a1a;letter-spacing:-0.5px;-webkit-text-stroke:0.2px #1a1a1a;">31</div>
<div class="t" style="right:89.5px;top:727.52px;font:normal 12.5px 'Liberation Mono', monospace;line-height:12.5px;color:#1a1a1a;letter-spacing:-0.5px;-webkit-text-stroke:0.2px #1a1a1a;">0x00000000</div>
<div style="left:1499px;top:741px;width:496px;height:15px;background:#dddddd;"></div>
<div style="left:1499px;top:756px;width:496px;height:1px;background:#7a8a99;"></div>
<div style="left:1652px;top:741px;width:1px;height:16px;background:#7a8a99;"></div>
<div style="left:1806px;top:741px;width:1px;height:16px;background:#7a8a99;"></div>
<div style="left:1994px;top:741px;width:1px;height:16px;background:#7a8a99;"></div>
<div class="t" style="left:1500.2px;top:743.52px;font:normal 12.5px 'Liberation Mono', monospace;line-height:12.5px;color:#1a1a1a;letter-spacing:-0.5px;-webkit-text-stroke:0.2px #1a1a1a;">pc</div>
<div class="t" style="right:89.5px;top:743.52px;font:normal 12.5px 'Liberation Mono', monospace;line-height:12.5px;color:#1a1a1a;letter-spacing:-0.5px;-webkit-text-stroke:0.2px #1a1a1a;">0x00400008</div>
<div style="left:1499px;top:757px;width:496px;height:15px;background:#ffffff;"></div>
<div style="left:1499px;top:772px;width:496px;height:1px;background:#7a8a99;"></div>
<div style="left:1652px;top:757px;width:1px;height:16px;background:#7a8a99;"></div>
<div style="left:1806px;top:757px;width:1px;height:16px;background:#7a8a99;"></div>
<div style="left:1994px;top:757px;width:1px;height:16px;background:#7a8a99;"></div>
<div class="t" style="left:1500.2px;top:759.52px;font:normal 12.5px 'Liberation Mono', monospace;line-height:12.5px;color:#1a1a1a;letter-spacing:-0.5px;-webkit-text-stroke:0.2px #1a1a1a;">hi</div>
<div class="t" style="right:89.5px;top:759.52px;font:normal 12.5px 'Liberation Mono', monospace;line-height:12.5px;color:#1a1a1a;letter-spacing:-0.5px;-webkit-text-stroke:0.2px #1a1a1a;">0x00000000</div>
<div style="left:1499px;top:773px;width:496px;height:15px;background:#dddddd;"></div>
<div style="left:1499px;top:788px;width:496px;height:1px;background:#7a8a99;"></div>
<div style="left:1652px;top:773px;width:1px;height:16px;background:#7a8a99;"></div>
<div style="left:1806px;top:773px;width:1px;height:16px;background:#7a8a99;"></div>
<div style="left:1994px;top:773px;width:1px;height:16px;background:#7a8a99;"></div>
<div class="t" style="left:1500.2px;top:775.52px;font:normal 12.5px 'Liberation Mono', monospace;line-height:12.5px;color:#1a1a1a;letter-spacing:-0.5px;-webkit-text-stroke:0.2px #1a1a1a;">lo</div>
<div class="t" style="right:89.5px;top:775.52px;font:normal 12.5px 'Liberation Mono', monospace;line-height:12.5px;color:#1a1a1a;letter-spacing:-0.5px;-webkit-text-stroke:0.2px #1a1a1a;">0x00000000</div>
<div style="left:2000px;top:179px;width:1px;height:911px;background:#eeeeee;"></div></body></html>
